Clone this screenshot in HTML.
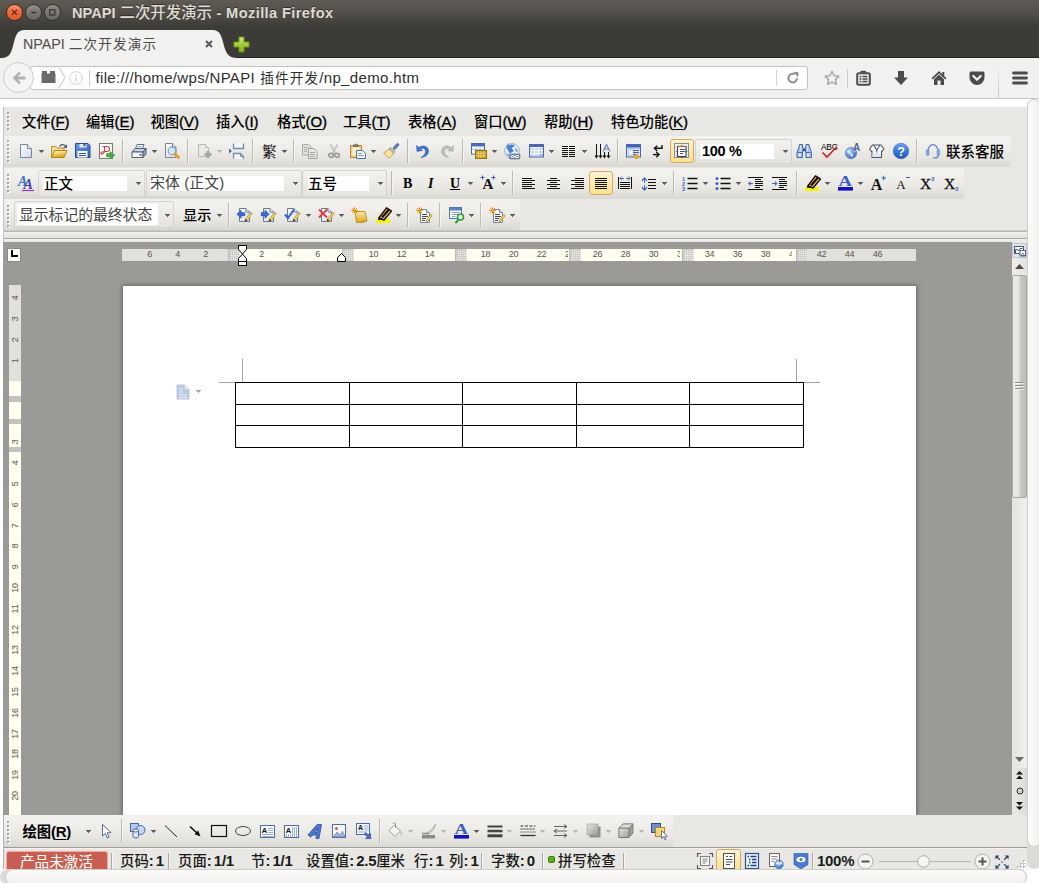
<!DOCTYPE html>
<html><head><meta charset="utf-8"><title>NPAPI 二次开发演示</title>
<style>
html,body{margin:0;padding:0;}
body{width:1039px;height:883px;position:relative;overflow:hidden;background:#fff;font-family:"Liberation Sans","Noto Sans CJK SC","WenQuanYi Zen Hei",sans-serif;font-size:15px;color:#000;}
.a{position:absolute;}
.t{position:absolute;white-space:nowrap;line-height:18px;}
svg{position:absolute;overflow:visible;}
#titlebar{left:0;top:0;width:1039px;height:28px;background:linear-gradient(#5e5b53 0,#57544d 8px,#4b4943 17px,#413f3b 24px,#3c3b37 27px);}
#title{left:72px;top:4px;font-size:14.6px;font-weight:bold;color:#dfdbd2;font-family:"Liberation Sans","Noto Sans CJK SC",sans-serif;text-shadow:0 -1px 0 rgba(0,0,0,.45);}
.wb{position:absolute;width:16.5px;height:16.5px;border-radius:50%;top:4.1px;box-sizing:border-box;}
#tabbar{left:0;top:28px;width:1039px;height:30px;background:#3c3b37;box-shadow:inset 0 -1px 0 #252422;}
#navbar{left:0;top:58px;width:1039px;height:40px;background:#f2f1f0;border-bottom:1px solid #c9c7c3;}
#urlbar{left:30px;top:66px;width:776px;height:22px;background:#fff;border:1px solid #c4c2be;border-radius:3px;}
#plugin{left:3px;top:107px;width:1024px;height:763px;background:#e8e7e3;overflow:hidden;font-family:"Liberation Sans","Noto Sans CJK SC",sans-serif;font-weight:500;}
.strip{position:absolute;background:linear-gradient(#f3f2ef 0,#efeeea 35%,#e6e5e0 70%,#d9d8d2 100%);border-radius:0 0 3px 0;}
.sep{position:absolute;width:1px;height:24px;background:#bab9b4;box-shadow:1px 0 0 #f6f5f3;}
.dd{position:absolute;width:0;height:0;border-left:2.5px solid transparent;border-right:2.5px solid transparent;border-top:3px solid #5c5c5a;}
.dd.dis{border-top-color:#b5b4b0;}
.grip{position:absolute;width:2px;height:2px;background:#a5a49f;box-shadow:1px 1px 0 #fff;}
.field{position:absolute;background:#fff;}
.combo{position:absolute;box-sizing:border-box;border:1px solid #d4d3ce;border-radius:2px;background:linear-gradient(#f3f2ef,#e4e3de);}
.act{position:absolute;box-sizing:border-box;border:1px solid #d9a760;border-radius:3px;background:linear-gradient(#fdf4d6,#fbe7a6 60%,#fbe08c);}
.mc{font-size:14.3px}
.mk{letter-spacing:-0.1px;-webkit-text-stroke:0.35px #000}
.mk u{text-underline-offset:1.5px}
.rn{font-size:9px;color:#5a574b;line-height:18px;letter-spacing:-0.3px;font-weight:normal}
.cj{font-weight:500;letter-spacing:0;font-size:14.4px}
.st{letter-spacing:-0.3px;word-spacing:-1.5px;position:absolute;white-space:nowrap;line-height:18px;font-weight:bold;font-size:15px;font-family:"Liberation Sans","Noto Sans CJK SC",sans-serif;color:#1a1a1a;}
</style></head><body>
<div id="titlebar" class="a"></div>
<div class="wb" style="left:6.2px;background:linear-gradient(#f1906e,#e9683a 50%,#e35a2a);border:1px solid #4a281c"></div>
<div class="wb" style="left:25.2px;background:linear-gradient(#8f8d86,#66645e);border:1px solid #302f2b"></div>
<div class="wb" style="left:44.3px;background:linear-gradient(#8f8d86,#66645e);border:1px solid #302f2b"></div>
<svg style="left:6px;top:4px" width="54" height="17" viewBox="0 0 54 17"><path d="M5.9 5.8l5.1 5.100M11 5.8l-5.100 5.100" stroke="#5a1f0e" stroke-width="1.2" fill="none"/><path d="M25.200 8.500h5.200" stroke="#33322e" stroke-width="1.400"/><rect x="43.700" y="5.800" width="5.200" height="5.200" fill="none" stroke="#33322e" stroke-width="1.200"/></svg>
<div id="title" class="t">NPAPI <span style="font-size:15.4px;font-weight:500">二次开发演示</span><span style="letter-spacing:0.4px"> - Mozilla Firefox</span></div>
<div id="tabbar" class="a"></div>
<svg style="left:0;top:28px" width="250" height="31" viewBox="0 0 250 31"><path d="M0 30 C10 30 11 26 14 14 C17 3 19 2 27 2 L210 2 C218 2 220 3 223 14 C226 26 228 30 238 30 L250 30 L250 31 L0 31Z" fill="#f2f1f0"/></svg>
<div class="t" style="left:23px;top:35px;font-size:14.75px;color:#4c4c4c"><span style="font-size:14.3px">NPAPI </span><span style="font-weight:400;font-size:13.6px;letter-spacing:1.15px">二次开发演示</span></div>
<svg style="left:204px;top:39px" width="10" height="10" viewBox="0 0 10 10"><path d="M2 2l6 6M8 2l-6 6" stroke="#5a5955" stroke-width="2"/></svg>
<svg style="left:233px;top:36px" width="17" height="17" viewBox="0 0 17 17"><defs><linearGradient id="gplus" x1="0" y1="0" x2="0" y2="1"><stop offset="0" stop-color="#cfe47c"/><stop offset="0.5" stop-color="#a9cc3c"/><stop offset="1" stop-color="#86ad1c"/></linearGradient></defs><path d="M6 1h5v5h5v5h-5v5h-5v-5h-5v-5h5z" fill="url(#gplus)" stroke="#6f9a16" stroke-width="1"/></svg>
<div id="navbar" class="a"></div>
<div id="urlbar" class="a"></div>

<div class="a" style="left:3px;top:62px;width:31px;height:31px;border-radius:50%;background:#f5f4f3;border:1px solid #cfcdca;box-sizing:border-box"></div>
<svg style="left:11px;top:70px" width="16" height="16" viewBox="0 0 16 16"><path d="M1.5 8 L8 1.8 L9.8 3.6 L6.8 6.6 L14.5 6.6 L14.5 9.4 L6.8 9.4 L9.8 12.4 L8 14.2Z" fill="#b3b2b0"/></svg>
<svg style="left:41px;top:70px" width="15" height="14" viewBox="0 0 15 14"><path d="M1 1h5v2.5h3V1h5v2.5h0.5V13H0.5V3.500H1z" fill="#6a6a6a"/></svg>
<svg style="left:57px;top:66px" width="10" height="23" viewBox="0 0 10 23"><path d="M1.5 0.500L8 11.500L1.500 22.500" fill="none" stroke="#c9c7c3" stroke-width="1"/></svg>
<svg style="left:69px;top:71px" width="14" height="14" viewBox="0 0 14 14"><circle cx="7" cy="7" r="6.300" fill="none" stroke="#d4d3d1" stroke-width="1"/><rect x="6.300" y="6" width="1.400" height="4.500" fill="#d4d3d1"/><rect x="6.300" y="3.500" width="1.400" height="1.400" fill="#d4d3d1"/></svg>
<div class="a" style="left:89px;top:70px;width:1px;height:16px;background:#cfcdca"></div>
<div class="a" style="left:776px;top:70px;width:1px;height:16px;background:#d6d4d0"></div>
<svg style="left:786px;top:71px" width="14" height="14" viewBox="0 0 14 14"><path d="M11 7.300A4.300 4.300 0 1 1 8.500 3.200" fill="none" stroke="#8a9099" stroke-width="2"/><path d="M7.200 0.800L12.500 1.200L12 6.200Z" fill="#8a9099"/></svg>
<svg style="left:824px;top:70px" width="16" height="16" viewBox="0 0 16 16"><path d="M8 1.300L10.100 5.700L14.900 6.300L11.400 9.600L12.300 14.400L8 12.100L3.700 14.400L4.600 9.600L1.100 6.300L5.900 5.700Z" fill="none" stroke="#a9a8a6" stroke-width="1.500" stroke-linejoin="round"/></svg>
<div class="a" style="left:847px;top:69px;width:1px;height:19px;background:#cfcdca"></div>
<svg style="left:856px;top:70px" width="15" height="16" viewBox="0 0 15 16"><path d="M4.500 0.800h5.500v2H4.500z" fill="#4c4c4c"/><rect x="1.200" y="3.200" width="12.600" height="11.600" rx="1.500" fill="none" stroke="#4c4c4c" stroke-width="2"/><path d="M3.500 6.500h2M6.500 6.500h5M3.500 9h2M6.500 9h5M3.500 11.500h2M6.500 11.500h5" stroke="#4c4c4c" stroke-width="1.500"/></svg>
<svg style="left:893px;top:70px" width="16" height="16" viewBox="0 0 16 16"><path d="M5 1h6v6.500h4L8 15L1 7.500h4z" fill="#4c4c4c"/></svg>
<svg style="left:931px;top:70px" width="16" height="16" viewBox="0 0 16 16"><path d="M8 1L15.500 8.200L14.300 9.400L8 3.400L1.700 9.400L0.500 8.200Z" fill="#4c4c4c"/><path d="M3 9.200L8 4.600L13 9.200V15H9.500V10.500H6.500V15H3Z" fill="#4c4c4c"/><rect x="11.300" y="2" width="2" height="4" fill="#4c4c4c"/></svg>
<svg style="left:969px;top:70px" width="16" height="16" viewBox="0 0 16 16"><path d="M2 1.500h12a1.500 1.500 0 0 1 1.500 1.500v4.500a7.500 7.500 0 0 1-15 0V3A1.500 1.500 0 0 1 2 1.500z" fill="#4c4c4c"/><path d="M4.300 6L8 9.600L11.700 6" fill="none" stroke="#f2f1f0" stroke-width="2.200" stroke-linecap="round" stroke-linejoin="round"/></svg>
<div class="a" style="left:998px;top:68px;width:1px;height:30px;background:linear-gradient(rgba(200,198,194,.2),#c8c6c2)"></div>
<svg style="left:1012px;top:70px" width="16" height="16" viewBox="0 0 16 16"><path d="M1.500 3h13M1.500 8h13M1.500 13h13" stroke="#4c4c4c" stroke-width="2.800" stroke-linecap="round"/></svg>
<div class="t" style="left:95.5px;top:69px;font-size:15px;color:#2e2e2e"><span id="u1" style="letter-spacing:0.33px">file:///home/wps/NPAPI</span><span id="u2" style="font-weight:400;font-size:13.6px;letter-spacing:1.15px;word-spacing:0.3px"> 插件开发</span><span id="u3" style="letter-spacing:0.34px">/np_demo.htm</span></div>
<svg width="0" height="0" style="position:absolute"><defs>
<linearGradient id="gpage" x1="0" y1="0" x2="1" y2="1"><stop offset="0" stop-color="#ffffff"/><stop offset="1" stop-color="#cfd9ee"/></linearGradient>
<linearGradient id="gfold" x1="0" y1="0" x2="0" y2="1"><stop offset="0" stop-color="#fbe9a4"/><stop offset="1" stop-color="#dca425"/></linearGradient>
<linearGradient id="gblue" x1="0" y1="0" x2="0" y2="1"><stop offset="0" stop-color="#5b8ad8"/><stop offset="1" stop-color="#2b57ad"/></linearGradient>
<radialGradient id="gglobe" cx="0.35" cy="0.3" r="0.8"><stop offset="0" stop-color="#a9cdf6"/><stop offset="1" stop-color="#2f66c2"/></radialGradient>
<linearGradient id="ggray" x1="0" y1="0" x2="1" y2="1"><stop offset="0" stop-color="#e6e6e4"/><stop offset="1" stop-color="#9b9b98"/></linearGradient>
<linearGradient id="ghl" x1="0" y1="0" x2="0" y2="1"><stop offset="0" stop-color="#f6c667"/><stop offset="1" stop-color="#c98a1a"/></linearGradient>
<linearGradient id="gblue2" x1="0" y1="0" x2="1" y2="1"><stop offset="0" stop-color="#6a98e8"/><stop offset="1" stop-color="#3560b8"/></linearGradient><linearGradient id="gfold2" x1="0" y1="0" x2="0.300" y2="1"><stop offset="0" stop-color="#fdf2c0"/><stop offset="0.500" stop-color="#f4d46a"/><stop offset="1" stop-color="#d9a21e"/></linearGradient></defs></svg><div id="plugin" class="a">
<div class="grip" style="left:4px;top:5px"></div>
<div class="grip" style="left:4px;top:9px"></div>
<div class="grip" style="left:4px;top:13px"></div>
<div class="grip" style="left:4px;top:17px"></div>
<div class="grip" style="left:4px;top:21px"></div>
<div class="t" style="left:19px;top:6px;"><span class="mc">文件</span><span class="mk">(<u>F</u>)</span></div>
<div class="t" style="left:83px;top:6px;"><span class="mc">编辑</span><span class="mk">(<u>E</u>)</span></div>
<div class="t" style="left:147.5px;top:6px;"><span class="mc">视图</span><span class="mk">(<u>V</u>)</span></div>
<div class="t" style="left:213px;top:6px;"><span class="mc">插入</span><span class="mk">(<u>I</u>)</span></div>
<div class="t" style="left:274px;top:6px;"><span class="mc">格式</span><span class="mk">(<u>O</u>)</span></div>
<div class="t" style="left:340px;top:6px;"><span class="mc">工具</span><span class="mk">(<u>T</u>)</span></div>
<div class="t" style="left:405px;top:6px;"><span class="mc">表格</span><span class="mk">(<u>A</u>)</span></div>
<div class="t" style="left:471px;top:6px;"><span class="mc">窗口</span><span class="mk">(<u>W</u>)</span></div>
<div class="t" style="left:541px;top:6px;"><span class="mc">帮助</span><span class="mk">(<u>H</u>)</span></div>
<div class="t" style="left:608px;top:6px;"><span class="mc">特色功能</span><span class="mk">(<u>K</u>)</span></div>
<div class="strip" style="left:0px;top:29px;width:1008px;height:31px;"></div>
<div class="strip" style="left:0px;top:61px;width:961px;height:31px;"></div>
<div class="strip" style="left:0px;top:92px;width:517px;height:31px;"></div>
<div class="grip" style="left:4px;top:32.5px"></div>
<div class="grip" style="left:4px;top:36.5px"></div>
<div class="grip" style="left:4px;top:40.5px"></div>
<div class="grip" style="left:4px;top:44.5px"></div>
<div class="grip" style="left:4px;top:48.5px"></div>
<div class="grip" style="left:4px;top:52.5px"></div>
<svg style="left:15px;top:36px" width="16" height="16" viewBox="0 0 16 16"><path d="M2.500 1.500h7l4 4v9h-11z" fill="url(#gpage)" stroke="#7b8798"/><path d="M9.500 1.500v4h4" fill="#eef2fa" stroke="#7b8798"/></svg>
<svg style="left:36px;top:43px" width="5" height="3" viewBox="0 0 5 3" shape-rendering="crispEdges"><rect x="0" y="0" width="5" height="1" fill="#5e5e5c"/><rect x="1" y="1" width="3" height="1" fill="#5e5e5c"/><rect x="2" y="2" width="1" height="1" fill="#5e5e5c"/></svg>
<svg style="left:48px;top:36px" width="16" height="16" viewBox="0 0 16 16"><path d="M0.500 14.500V3.500h4.500l1.500 1.500h6.500v2.500" fill="#f2dc98" stroke="#b8923a"/><path d="M0.500 14.500L3.500 7.500h12.500L13 14.500z" fill="url(#gfold2)" stroke="#b0851c"/><path d="M8.500 3.500c1.500-2.500 4.500-2.500 6-0.300" fill="none" stroke="#4a5870" stroke-width="1.300"/><path d="M16 1.300v3.700h-3.700z" fill="#4a5870"/></svg>
<svg style="left:72px;top:36px" width="16" height="16" viewBox="0 0 16 16"><path d="M0.500 0.500h12.500l2 2v12h-14.500z" fill="url(#gblue2)" stroke="#2a4a98"/><rect x="4.500" y="1" width="7" height="3.500" fill="#e6eaf2"/><rect x="8.500" y="1" width="2" height="2.200" fill="#2f4f9c"/><rect x="2.500" y="8" width="10" height="6.500" fill="#fff"/><g shape-rendering="crispEdges"><rect x="4" y="10" width="7" height="1" fill="#35559f"/><rect x="4" y="12" width="7" height="1" fill="#35559f"/></g></svg>
<svg style="left:96px;top:36px" width="16" height="16" viewBox="0 0 16 16"><rect x="0.500" y="0.500" width="13" height="15" fill="#fff" stroke="#7a7a7a"/><path d="M5.500 3.500v5.500M3.500 3.500h4.500a2.500 2.500 0 0 1 0 5h-2.500c-0.500 2-3 3.500-3.500 2s1.500-2 3.500-2" fill="none" stroke="#d04545" stroke-width="1.100"/><path d="M7.500 10.500h3.500v-2l5 3.700l-5 3.700v-2h-3.500z" fill="#3fae3f" stroke="#2f962f" stroke-width="0.500"/></svg>
<div class="sep" style="left:119px;top:32px;height:24px"></div>
<svg style="left:128px;top:36px" width="16" height="16" viewBox="0 0 16 16"><path d="M4.500 6L6 1.500h7L11.500 6z" fill="#fff" stroke="#5c6f8a"/><path d="M6.500 3.500h4M6 5h4" stroke="#9aa" stroke-width="0.800"/><path d="M1 9l3-3.500h11L12 9z" fill="#c7d3e6" stroke="#4c5f7c"/><path d="M1 9h11v5.500H1z" fill="#f2f5fa" stroke="#4c5f7c"/><path d="M12 9l3-3.500v5.500L12 14.500z" fill="#8fa3c2" stroke="#4c5f7c"/><rect x="8.500" y="11" width="2" height="1.800" fill="#c0504d"/></svg>
<svg style="left:149px;top:43px" width="5" height="3" viewBox="0 0 5 3" shape-rendering="crispEdges"><rect x="0" y="0" width="5" height="1" fill="#5e5e5c"/><rect x="1" y="1" width="3" height="1" fill="#5e5e5c"/><rect x="2" y="2" width="1" height="1" fill="#5e5e5c"/></svg>
<svg style="left:161px;top:36px" width="16" height="16" viewBox="0 0 16 16"><path d="M1.500 0.500h7l3.500 3.500v10.500h-10.500z" fill="url(#gpage)" stroke="#7b8798"/><path d="M8.500 0.500v3.500h3.500" fill="#eef2fa" stroke="#7b8798"/><circle cx="8" cy="8" r="3.800" fill="#cfeaf7" fill-opacity="0.900" stroke="#8aa0b8" stroke-width="1.200"/><path d="M11 11l3.500 3.500" stroke="#e8962a" stroke-width="2.600" stroke-linecap="round"/></svg>
<div class="sep" style="left:184px;top:32px;height:24px"></div>
<svg style="left:194px;top:36px" width="16" height="16" viewBox="0 0 16 16"><path d="M1.500 1.500h7l3 3v9h-10z" fill="#e9e9e6" stroke="#b9b9b5"/><path d="M8.500 1.500v3h3" fill="#f4f4f2" stroke="#b9b9b5"/><path d="M11 8v7M7.500 11.500h7" stroke="#a6a6a3" stroke-width="3"/></svg>
<svg style="left:214px;top:43px" width="5" height="3" viewBox="0 0 5 3" shape-rendering="crispEdges"><rect x="0" y="0" width="5" height="1" fill="#b9b8b4"/><rect x="1" y="1" width="3" height="1" fill="#b9b8b4"/><rect x="2" y="2" width="1" height="1" fill="#b9b8b4"/></svg>
<svg style="left:226px;top:36px" width="16" height="16" viewBox="0 0 16 16"><path d="M4.500 0.500v5h10v-5" fill="#f4f7fb" stroke="#6f8bb0" stroke-width="1.300"/><path d="M4.500 15.500v-5h7l3 3v2.500" fill="#f4f7fb" stroke="#6f8bb0" stroke-width="1.300"/><path d="M11.500 10.500v3h3" fill="none" stroke="#6f8bb0"/><path d="M0 5.500l3 2.500l-3 2.500z" fill="#4a6a96"/></svg>
<div class="sep" style="left:249px;top:32px;height:24px"></div>
<div class="t" style="left:259px;top:35px;font-size:14.500px;font-weight:normal;font-family:'Noto Serif CJK SC',serif">繁</div>
<svg style="left:279px;top:43px" width="5" height="3" viewBox="0 0 5 3" shape-rendering="crispEdges"><rect x="0" y="0" width="5" height="1" fill="#5e5e5c"/><rect x="1" y="1" width="3" height="1" fill="#5e5e5c"/><rect x="2" y="2" width="1" height="1" fill="#5e5e5c"/></svg>
<div class="sep" style="left:290px;top:32px;height:24px"></div>
<svg style="left:299px;top:36px" width="16" height="16" viewBox="0 0 16 16"><path d="M0.500 1.500h6l2.500 2.500v8h-8.500z" fill="#e2e2df" stroke="#a9a9a6"/><path d="M6.500 5.500h5.500l3 3v7h-8.500z" fill="#e9e9e6" stroke="#9f9f9c"/><g shape-rendering="crispEdges"><rect x="2" y="4" width="4" height="1" fill="#b0b0ad"/><rect x="2" y="6" width="3" height="1" fill="#b0b0ad"/><rect x="2" y="8" width="3" height="1" fill="#b0b0ad"/><rect x="8" y="9" width="5" height="1" fill="#a6a6a3"/><rect x="8" y="11" width="5" height="1" fill="#a6a6a3"/><rect x="8" y="13" width="5" height="1" fill="#a6a6a3"/></g></svg>
<svg style="left:323px;top:36px" width="16" height="16" viewBox="0 0 16 16"><path d="M4.500 1.500L9.300 10M11.500 1.500L6.700 10" stroke="#c2c2bf" stroke-width="1.600" fill="none"/><ellipse cx="5" cy="12.300" rx="2.300" ry="2" fill="none" stroke="#9c9c99" stroke-width="1.700"/><ellipse cx="11" cy="12.300" rx="2.300" ry="2" fill="none" stroke="#9c9c99" stroke-width="1.700"/></svg>
<svg style="left:347px;top:36px" width="16" height="16" viewBox="0 0 16 16"><rect x="0.500" y="2.500" width="11" height="12" fill="#f1cf87" stroke="#b98b2f"/><rect x="2.500" y="4.500" width="7" height="8" fill="#fdf3d7"/><path d="M3.500 3.500v-1.500h1.500a1 1 0 0 1 2 0h1.500v1.500z" fill="#8c8c8c" stroke="#555" stroke-width="0.700"/><path d="M6.500 7.500h6l3 3v5h-9z" fill="#f4f8fd" stroke="#4e6f9e"/><path d="M8 10.500h4M8 12.500h6" stroke="#7f9cc4" stroke-width="1"/></svg>
<svg style="left:368px;top:43px" width="5" height="3" viewBox="0 0 5 3" shape-rendering="crispEdges"><rect x="0" y="0" width="5" height="1" fill="#5e5e5c"/><rect x="1" y="1" width="3" height="1" fill="#5e5e5c"/><rect x="2" y="2" width="1" height="1" fill="#5e5e5c"/></svg>
<svg style="left:380px;top:36px" width="16" height="16" viewBox="0 0 16 16"><path d="M10 5l3.500-4a1.300 1.300 0 0 1 2 1.700L12 6.500z" fill="#6b7fc7" stroke="#3d4f9a" stroke-width="0.800"/><path d="M7.500 4.500l4.500 4l-1.300 1.500l-4.500-4z" fill="#c9c9c9" stroke="#777" stroke-width="0.700"/><path d="M6 6l4.500 4c-1 2.500-3 4.500-5 5l-5-5c2-1 4-2.500 5.500-4z" fill="#f6e4a2" stroke="#b9983a" stroke-width="0.800"/></svg>
<div class="sep" style="left:404px;top:32px;height:24px"></div>
<svg style="left:412px;top:36px" width="16" height="16" viewBox="0 0 16 16"><path d="M1.500 2.500l0.500 6l5.500-1l-2-1.500c2-1.500 5-0.500 5 2.500c0 2.500-2 4.500-4.500 6c5-0.500 8-3.500 7.500-7c-0.500-4.500-6-6-9.500-3z" fill="#3f72d4" stroke="#2a4fa6" stroke-width="0.500"/></svg>
<svg style="left:436px;top:36px" width="16" height="16" viewBox="0 0 16 16"><path d="M14.500 2.500l-0.500 6l-5.500-1l2-1.500c-2-1.500-5-0.500-5 2.500c0 2.500 2 4.500 4.500 6c-5-0.500-8-3.500-7.500-7c0.500-4.500 6-6 9.500-3z" fill="#bdbdba" stroke="#a6a6a3" stroke-width="0.500"/></svg>
<div class="sep" style="left:459px;top:32px;height:24px"></div>
<svg style="left:468px;top:36px" width="16" height="16" viewBox="0 0 16 16"><rect x="0.500" y="0.500" width="13" height="10.500" fill="#fff" stroke="#4a68a8"/><rect x="1" y="1" width="12" height="2" fill="#4a6cb8"/><rect x="1" y="3" width="12" height="1" fill="#a9c0ea"/><path d="M1 6.500h12M5 4v6.500M9 4v6.500" stroke="#aab9d6" stroke-width="0.900"/><rect x="4.500" y="7.500" width="11" height="8" fill="#c8961a" stroke="#94700e"/><path d="M5 10.200h10M5 12.800h10M7.300 8v7M10 8v7M12.700 8v7" stroke="#f6dc90" stroke-width="0.800"/></svg>
<svg style="left:489px;top:43px" width="5" height="3" viewBox="0 0 5 3" shape-rendering="crispEdges"><rect x="0" y="0" width="5" height="1" fill="#5e5e5c"/><rect x="1" y="1" width="3" height="1" fill="#5e5e5c"/><rect x="2" y="2" width="1" height="1" fill="#5e5e5c"/></svg>
<svg style="left:501px;top:36px" width="16" height="16" viewBox="0 0 16 16"><circle cx="8" cy="8" r="7.500" fill="#e4eefb" stroke="#8fa6cc" stroke-width="0.800"/><path d="M4 2.500c2-1.500 5-1.500 7 0c-1 1.500-2.500 1-3 2.500s2 1.500 1.500 3s-2.500 1-3.500 2.500c-1.500-1-1-3-2.500-4s-1-3.500 0.500-6.500z" fill="#4f7fd0"/><path d="M11.500 4.500c1.500 1 2.500 3 2 5l-2-1.500z" fill="#6f98dc"/><path d="M2 10c1 2 2.500 3.500 4.500 4l-0.500-2.500z" fill="#7fa4e0"/><rect x="5.500" y="11" width="10.500" height="5" rx="1.500" fill="#7088ae" stroke="#4a6088" stroke-width="0.600"/><rect x="7" y="12.500" width="3" height="2" rx="0.500" fill="none" stroke="#fff" stroke-width="1"/><rect x="11.500" y="12.500" width="3" height="2" rx="0.500" fill="none" stroke="#fff" stroke-width="1"/><path d="M10 13.500h1.500" stroke="#fff" stroke-width="1"/></svg>
<svg style="left:525px;top:36px" width="16" height="16" viewBox="0 0 16 16"><rect x="1.500" y="1.500" width="14" height="12.500" fill="#c9d7ef" stroke="#4a68a8"/><rect x="2" y="2" width="13" height="2" fill="#4668b4"/><g shape-rendering="crispEdges"><rect x="2" y="4" width="13" height="1" fill="#eef3fb"/><rect x="2" y="7" width="13" height="1" fill="#f4f7fc"/><rect x="2" y="10" width="13" height="1" fill="#f4f7fc"/><rect x="6" y="4" width="1" height="9" fill="#f4f7fc"/><rect x="10" y="4" width="1" height="9" fill="#f4f7fc"/></g><rect x="11" y="11" width="4" height="2.500" fill="#9fb6de"/></svg>
<svg style="left:546px;top:43px" width="5" height="3" viewBox="0 0 5 3" shape-rendering="crispEdges"><rect x="0" y="0" width="5" height="1" fill="#5e5e5c"/><rect x="1" y="1" width="3" height="1" fill="#5e5e5c"/><rect x="2" y="2" width="1" height="1" fill="#5e5e5c"/></svg>
<svg style="left:558px;top:36px" width="16" height="16" viewBox="0 0 16 16"><g shape-rendering="crispEdges"><rect x="1" y="3" width="6" height="1" fill="#111"/><rect x="1" y="5" width="6" height="1" fill="#111"/><rect x="1" y="7" width="6" height="1" fill="#111"/><rect x="1" y="9" width="6" height="1" fill="#111"/><rect x="1" y="11" width="6" height="1" fill="#111"/><rect x="1" y="13" width="6" height="1" fill="#111"/><rect x="8" y="3" width="6" height="1" fill="#111"/><rect x="8" y="5" width="6" height="1" fill="#111"/><rect x="8" y="7" width="6" height="1" fill="#111"/><rect x="8" y="9" width="6" height="1" fill="#111"/><rect x="8" y="11" width="6" height="1" fill="#111"/><rect x="8" y="13" width="6" height="1" fill="#111"/></g></svg>
<svg style="left:579px;top:43px" width="5" height="3" viewBox="0 0 5 3" shape-rendering="crispEdges"><rect x="0" y="0" width="5" height="1" fill="#5e5e5c"/><rect x="1" y="1" width="3" height="1" fill="#5e5e5c"/><rect x="2" y="2" width="1" height="1" fill="#5e5e5c"/></svg>
<svg style="left:591px;top:36px" width="16" height="16" viewBox="0 0 16 16"><g shape-rendering="crispEdges"><rect x="2" y="1" width="1" height="13" fill="#111"/><rect x="6" y="1" width="1" height="13" fill="#111"/><rect x="10" y="9" width="1" height="5" fill="#111"/><rect x="14" y="9" width="1" height="5" fill="#111"/></g><path d="M0.500 12.500h4l-2 3zM4.500 12.500h4l-2 3zM8.500 12.500h4l-2 3zM12.500 12.500h4l-2 3z" fill="#111"/><path d="M9 8.500L12.500 1.500L16 8.500M10.300 6h4.400" fill="none" stroke="#5f7fc4" stroke-width="1.100"/></svg>
<div class="sep" style="left:614px;top:32px;height:24px"></div>
<svg style="left:623px;top:36px" width="16" height="16" viewBox="0 0 16 16"><rect x="0.500" y="1.500" width="14" height="12.500" fill="#dbe6f6" stroke="#4a68a8"/><rect x="1" y="2" width="13" height="2.500" fill="#3f63b4"/><path d="M1 5h13" stroke="#89a4d8" stroke-width="1"/><ellipse cx="5" cy="9.500" rx="3" ry="3.300" fill="#f1f6fc" stroke="#9db4dc" stroke-width="0.800"/><g shape-rendering="crispEdges"><rect x="7" y="7" width="6" height="1" fill="#3f5fa0"/><rect x="7" y="9" width="6" height="1" fill="#3f5fa0"/><rect x="7" y="11" width="4" height="1" fill="#3f5fa0"/></g><path d="M10.500 10.700l2.700 2.700l-2.700 2.700l-2.700-2.700z" fill="#f4a83a" stroke="#d08418" stroke-width="0.700"/></svg>
<svg style="left:646px;top:36px" width="16" height="16" viewBox="0 0 16 16"><path d="M13 2v3.300H5.800" fill="none" stroke="#111" stroke-width="1.400"/><path d="M8.300 2.700L5.400 5.300L8.300 7.900" fill="none" stroke="#111" stroke-width="1.400"/><path d="M4 11.600h5.800" fill="none" stroke="#111" stroke-width="1.400"/><path d="M7.200 9L10.100 11.600L7.200 14.200" fill="none" stroke="#111" stroke-width="1.400"/></svg>
<div class="act" style="left:667px;top:32px;width:24px;height:24px;"></div>
<svg style="left:671px;top:36px" width="16" height="16" viewBox="0 0 16 16"><rect x="0.500" y="0.500" width="14" height="14" fill="#ececea" stroke="#8c8c8a"/><rect x="3.500" y="3.500" width="8.500" height="10" fill="#fff" stroke="#2f405f" stroke-width="1.100"/><path d="M3.500 3.500h8.500" stroke="#b8683a" stroke-width="1.100"/><path d="M7.750 2v1.500" stroke="#b8683a" stroke-width="1.200"/><path d="M7.750 13.500v1.300M2.300 8.500h1.200M12 8.500h1.200" stroke="#2f405f" stroke-width="1.200"/><g shape-rendering="crispEdges"><rect x="5.500" y="6" width="5" height="1" fill="#555"/><rect x="5.500" y="8" width="5" height="1" fill="#555"/><rect x="5.500" y="10" width="3" height="1" fill="#555"/></g></svg>
<div class="combo" style="left:692px;top:32px;width:97px;height:25px;"></div>
<div class="field" style="left:697px;top:37px;width:74px;height:15px;"></div>
<div class="t" style="left:699px;top:35px;font-weight:bold;font-size:14.5px;letter-spacing:-0.300px">100 %</div>
<svg style="left:780px;top:43px" width="5" height="3" viewBox="0 0 5 3" shape-rendering="crispEdges"><rect x="0" y="0" width="5" height="1" fill="#5e5e5c"/><rect x="1" y="1" width="3" height="1" fill="#5e5e5c"/><rect x="2" y="2" width="1" height="1" fill="#5e5e5c"/></svg>
<svg style="left:793px;top:36px" width="16" height="16" viewBox="0 0 16 16"><path d="M3.500 1.500h3v2.500h0.500v5h-0.500v5.500h-5.500V9.500L3 4z" fill="#a9c2ee" stroke="#3558a8" stroke-width="0.900" stroke-linejoin="round"/><path d="M13 1.500h-3v2.500h-0.500v5h0.500v5.500h5.500V9.500L13.500 4z" fill="#a9c2ee" stroke="#3558a8" stroke-width="0.900" stroke-linejoin="round"/><rect x="7" y="5.500" width="2.500" height="2.500" fill="#3558a8"/><path d="M1.500 9.500h5M10 9.500h5" stroke="#3558a8" stroke-width="0.800"/><path d="M3.500 10.500v3M12 10.500v3" stroke="#eaf1fc" stroke-width="1.600"/><path d="M4.700 2.500v6M11.200 2.500v6" stroke="#dfe9fa" stroke-width="1"/></svg>
<svg style="left:818px;top:36px" width="16" height="16" viewBox="0 0 16 16"><text x="8.300" y="6.500" font-family="Liberation Sans,sans-serif" font-size="8.500" text-anchor="middle" fill="#000" letter-spacing="-0.300">ABC</text><path d="M1.500 9.500l4.500 4.500l10-10.500" fill="none" stroke="#d42020" stroke-width="1.700"/></svg>
<svg style="left:841px;top:36px" width="16" height="16" viewBox="0 0 16 16"><circle cx="7" cy="10" r="5.800" fill="url(#gglobe)" stroke="#4f78c0" stroke-width="0.500"/><path d="M2.500 8.500c1-1.500 2.500-2 3.500-1s0.500 2.500 2 3s1.500 2.500 0.500 3.500c-1-0.500-2-1-2.500-2.500s-2.500-1-3.500-3z" fill="#dfeafa" fill-opacity="0.850"/><path d="M9 5.500c1 0.500 2.500 1.500 3 3l-2 0.500z" fill="#dfeafa" fill-opacity="0.700"/><text x="12.700" y="7.500" font-family="Liberation Sans,sans-serif" font-weight="bold" font-size="10" text-anchor="middle" fill="#56678c">A</text></svg>
<svg style="left:866px;top:36px" width="16" height="16" viewBox="0 0 16 16"><path d="M3.500 2L0.500 6L2.500 8.500L3 8V14.500H12.500V8L13 8.500L15 6L12 2Z" fill="#fff" stroke="#4a5468" stroke-width="1.100" stroke-linejoin="round"/><path d="M3.500 10h8.500v4h-8.500z" fill="#dfe8f6"/><path d="M4.500 2L7.800 7L11 2M7.800 7V9.500" fill="none" stroke="#4a5468" stroke-width="1.100"/></svg>
<svg style="left:890px;top:36px" width="16" height="16" viewBox="0 0 16 16"><defs><linearGradient id="ghelp" x1="0" y1="0" x2="0" y2="1"><stop offset="0" stop-color="#6aa4ee"/><stop offset="0.500" stop-color="#3a78d8"/><stop offset="1" stop-color="#1f55bc"/></linearGradient></defs><circle cx="8" cy="8" r="7.800" fill="url(#ghelp)" stroke="#2b5cb8" stroke-width="0.500"/><text x="8" y="12.500" font-family="Liberation Sans,sans-serif" font-weight="bold" font-size="12.500" text-anchor="middle" fill="#fff">?</text></svg>
<div class="sep" style="left:913px;top:32px;height:24px"></div>
<svg style="left:922px;top:36px" width="16" height="16" viewBox="0 0 16 16"><path d="M3 9.500V8a5 6.300 0 0 1 10 0V9.500" fill="none" stroke="#5a82d0" stroke-width="1.300"/><rect x="1.300" y="6.500" width="2.600" height="6" rx="1.300" fill="#86a6e4" stroke="#5a82d0" stroke-width="0.600"/><rect x="12.100" y="6.500" width="2.600" height="6" rx="1.300" fill="#86a6e4" stroke="#5a82d0" stroke-width="0.600"/><path d="M13.500 12.500c-0.500 2-2.500 2.800-5.500 2.500" fill="none" stroke="#5a82d0" stroke-width="1.100"/></svg>
<div class="t" style="left:943px;top:36px;font-size:14.500px;font-family:'Liberation Sans','Noto Sans CJK SC',sans-serif;font-weight:500">联系客服</div>
<div class="grip" style="left:4px;top:67px"></div>
<div class="grip" style="left:4px;top:71px"></div>
<div class="grip" style="left:4px;top:75px"></div>
<div class="grip" style="left:4px;top:79px"></div>
<div class="grip" style="left:4px;top:83px"></div>
<svg style="left:15px;top:68px" width="16" height="16" viewBox="0 0 16 16"><text x="0" y="11" font-family="Liberation Serif,serif" font-style="italic" font-weight="bold" font-size="14" fill="#3a78c8">A</text><text x="5.500" y="14" font-family="Liberation Serif,serif" font-style="italic" font-weight="bold" font-size="14" fill="#4a3fb4">A</text><path d="M4 15.500h12" stroke="#9a3aa8" stroke-width="1.200"/></svg>
<div class="combo" style="left:35px;top:63px;width:107px;height:27px;"></div>
<div class="field" style="left:40px;top:69px;width:84px;height:15px;"></div>
<div class="t" style="left:41px;top:68px;font-size:14.500px">正文</div>
<svg style="left:133px;top:75px" width="5" height="3" viewBox="0 0 5 3" shape-rendering="crispEdges"><rect x="0" y="0" width="5" height="1" fill="#5e5e5c"/><rect x="1" y="1" width="3" height="1" fill="#5e5e5c"/><rect x="2" y="2" width="1" height="1" fill="#5e5e5c"/></svg>
<div class="combo" style="left:143px;top:63px;width:156px;height:27px;"></div>
<div class="field" style="left:147px;top:69px;width:134px;height:15px;"></div>
<div class="t" style="left:147px;top:67px;color:#444;font-weight:400">宋体 (正文)</div>
<svg style="left:290px;top:75px" width="5" height="3" viewBox="0 0 5 3" shape-rendering="crispEdges"><rect x="0" y="0" width="5" height="1" fill="#5e5e5c"/><rect x="1" y="1" width="3" height="1" fill="#5e5e5c"/><rect x="2" y="2" width="1" height="1" fill="#5e5e5c"/></svg>
<div class="combo" style="left:299px;top:63px;width:85px;height:27px;"></div>
<div class="field" style="left:305px;top:69px;width:61px;height:15px;"></div>
<div class="t" style="left:305px;top:68px;font-size:14.500px">五号</div>
<svg style="left:375px;top:75px" width="5" height="3" viewBox="0 0 5 3" shape-rendering="crispEdges"><rect x="0" y="0" width="5" height="1" fill="#5e5e5c"/><rect x="1" y="1" width="3" height="1" fill="#5e5e5c"/><rect x="2" y="2" width="1" height="1" fill="#5e5e5c"/></svg>
<div class="sep" style="left:388px;top:64px;height:24px"></div>
<div class="t" style="left:400px;top:67.5px;font-family:'Liberation Serif',serif;font-weight:bold;font-size:14px">B</div>
<div class="t" style="left:425px;top:67.5px;font-family:'Liberation Serif',serif;font-weight:bold;font-style:italic;font-size:14px">I</div>
<div class="t" style="left:447px;top:67.5px;font-family:'Liberation Serif',serif;font-weight:bold;font-size:14px"><u>U</u></div>
<svg style="left:465px;top:75px" width="5" height="3" viewBox="0 0 5 3" shape-rendering="crispEdges"><rect x="0" y="0" width="5" height="1" fill="#5e5e5c"/><rect x="1" y="1" width="3" height="1" fill="#5e5e5c"/><rect x="2" y="2" width="1" height="1" fill="#5e5e5c"/></svg>
<svg style="left:477px;top:68px" width="16" height="16" viewBox="0 0 16 16"><text x="8" y="14" font-family="Liberation Serif,serif" font-weight="bold" font-size="15" text-anchor="middle" fill="#111">A</text><path d="M0.500 2.500h4M2.500 0.500v4M11.500 2.500h4M13.500 0.500v4" stroke="#3b5fc0" stroke-width="1"/></svg>
<svg style="left:498px;top:75px" width="5" height="3" viewBox="0 0 5 3" shape-rendering="crispEdges"><rect x="0" y="0" width="5" height="1" fill="#5e5e5c"/><rect x="1" y="1" width="3" height="1" fill="#5e5e5c"/><rect x="2" y="2" width="1" height="1" fill="#5e5e5c"/></svg>
<div class="sep" style="left:509px;top:64px;height:24px"></div>
<svg style="left:518px;top:68px" width="16" height="16" viewBox="0 0 16 16"><g shape-rendering="crispEdges"><rect x="1" y="3" width="10" height="1" fill="#111"/><rect x="1" y="5" width="13" height="1" fill="#111"/><rect x="1" y="7" width="10" height="1" fill="#111"/><rect x="1" y="9" width="13" height="1" fill="#111"/><rect x="1" y="11" width="10" height="1" fill="#111"/><rect x="1" y="13" width="13" height="1" fill="#111"/></g></svg>
<svg style="left:543px;top:68px" width="16" height="16" viewBox="0 0 16 16"><g shape-rendering="crispEdges"><rect x="4" y="3" width="7" height="1" fill="#111"/><rect x="1" y="5" width="13" height="1" fill="#111"/><rect x="4" y="7" width="7" height="1" fill="#111"/><rect x="1" y="9" width="13" height="1" fill="#111"/><rect x="4" y="11" width="7" height="1" fill="#111"/><rect x="1" y="13" width="13" height="1" fill="#111"/></g></svg>
<svg style="left:567px;top:68px" width="16" height="16" viewBox="0 0 16 16"><g shape-rendering="crispEdges"><rect x="5" y="3" width="9" height="1" fill="#111"/><rect x="1" y="5" width="13" height="1" fill="#111"/><rect x="5" y="7" width="9" height="1" fill="#111"/><rect x="1" y="9" width="13" height="1" fill="#111"/><rect x="5" y="11" width="9" height="1" fill="#111"/><rect x="1" y="13" width="13" height="1" fill="#111"/></g></svg>
<div class="act" style="left:586px;top:64px;width:24px;height:24px;"></div>
<svg style="left:590px;top:68px" width="16" height="16" viewBox="0 0 16 16"><g shape-rendering="crispEdges"><rect x="2" y="3" width="12" height="1" fill="#111"/><rect x="2" y="5" width="12" height="1" fill="#111"/><rect x="2" y="7" width="12" height="1" fill="#111"/><rect x="2" y="9" width="12" height="1" fill="#111"/><rect x="2" y="11" width="12" height="1" fill="#111"/><rect x="2" y="13" width="12" height="1" fill="#111"/></g></svg>
<svg style="left:614px;top:68px" width="16" height="16" viewBox="0 0 16 16"><g shape-rendering="crispEdges"><rect x="1" y="2" width="1" height="12" fill="#111"/><rect x="14" y="2" width="1" height="12" fill="#111"/><rect x="3" y="7" width="10" height="1" fill="#111"/><rect x="3" y="9" width="10" height="1" fill="#111"/><rect x="3" y="11" width="10" height="1" fill="#111"/><rect x="3" y="13" width="10" height="1" fill="#111"/><rect x="3" y="3" width="4" height="1" fill="#4a68b4"/><rect x="9" y="3" width="4" height="1" fill="#4a68b4"/></g><path d="M5 1.500L3 3.500L5 5.500M11 1.500L13 3.500L11 5.500" fill="none" stroke="#4a68b4" stroke-width="1"/></svg>
<svg style="left:638px;top:68px" width="16" height="16" viewBox="0 0 16 16"><g shape-rendering="crispEdges"><rect x="7" y="4" width="8" height="1" fill="#111"/><rect x="7" y="7" width="8" height="1" fill="#111"/><rect x="7" y="10" width="8" height="1" fill="#111"/><rect x="7" y="13" width="8" height="1" fill="#111"/><rect x="3" y="4" width="1" height="4" fill="#4a68b4"/><rect x="3" y="10" width="1" height="4" fill="#4a68b4"/></g><path d="M1 5.700L3.500 3L6 5.700M1 12.300L3.500 15L6 12.300" fill="none" stroke="#4a68b4" stroke-width="1.300"/></svg>
<svg style="left:659px;top:75px" width="5" height="3" viewBox="0 0 5 3" shape-rendering="crispEdges"><rect x="0" y="0" width="5" height="1" fill="#5e5e5c"/><rect x="1" y="1" width="3" height="1" fill="#5e5e5c"/><rect x="2" y="2" width="1" height="1" fill="#5e5e5c"/></svg>
<div class="sep" style="left:670px;top:64px;height:24px"></div>
<svg style="left:679px;top:68px" width="16" height="16" viewBox="0 0 16 16"><text x="0" y="5.500" font-family="Liberation Sans,sans-serif" font-weight="bold" font-size="5.500" fill="#3b5fc0">1</text><text x="0" y="10.500" font-family="Liberation Sans,sans-serif" font-weight="bold" font-size="5.500" fill="#3b5fc0">2</text><text x="0" y="15.500" font-family="Liberation Sans,sans-serif" font-weight="bold" font-size="5.500" fill="#3b5fc0">3</text><path d="M5.500 3.500h10M5.500 8.500h10M5.500 13.500h10" stroke="#111" stroke-width="1.300"/></svg>
<svg style="left:700px;top:75px" width="5" height="3" viewBox="0 0 5 3" shape-rendering="crispEdges"><rect x="0" y="0" width="5" height="1" fill="#5e5e5c"/><rect x="1" y="1" width="3" height="1" fill="#5e5e5c"/><rect x="2" y="2" width="1" height="1" fill="#5e5e5c"/></svg>
<svg style="left:712px;top:68px" width="16" height="16" viewBox="0 0 16 16"><circle cx="2" cy="3.500" r="1.500" fill="#3b5fc0"/><circle cx="2" cy="8.500" r="1.500" fill="#3b5fc0"/><circle cx="2" cy="13.500" r="1.500" fill="#3b5fc0"/><path d="M5.500 3.500h10M5.500 8.500h10M5.500 13.500h10" stroke="#111" stroke-width="1.300"/></svg>
<svg style="left:733px;top:75px" width="5" height="3" viewBox="0 0 5 3" shape-rendering="crispEdges"><rect x="0" y="0" width="5" height="1" fill="#5e5e5c"/><rect x="1" y="1" width="3" height="1" fill="#5e5e5c"/><rect x="2" y="2" width="1" height="1" fill="#5e5e5c"/></svg>
<svg style="left:744px;top:68px" width="16" height="16" viewBox="0 0 16 16"><g shape-rendering="crispEdges"><rect x="1" y="2" width="15" height="1" fill="#111"/><rect x="8" y="4" width="6" height="1" fill="#111"/><rect x="8" y="6" width="8" height="1" fill="#111"/><rect x="8" y="8" width="8" height="1" fill="#111"/><rect x="8" y="10" width="8" height="1" fill="#111"/><rect x="8" y="12" width="5" height="1" fill="#111"/><rect x="1" y="14" width="15" height="1" fill="#111"/><rect x="1" y="8" width="5" height="1" fill="#4a68b4"/></g><path d="M3.500 6L1 8.500L3.500 11z" fill="#4a68b4"/></svg>
<svg style="left:768px;top:68px" width="16" height="16" viewBox="0 0 16 16"><g shape-rendering="crispEdges"><rect x="1" y="2" width="15" height="1" fill="#111"/><rect x="8" y="4" width="6" height="1" fill="#111"/><rect x="8" y="6" width="8" height="1" fill="#111"/><rect x="8" y="8" width="8" height="1" fill="#111"/><rect x="8" y="10" width="8" height="1" fill="#111"/><rect x="8" y="12" width="5" height="1" fill="#111"/><rect x="1" y="14" width="15" height="1" fill="#111"/><rect x="1" y="8" width="5" height="1" fill="#4a68b4"/></g><path d="M4 6L6.500 8.500L4 11z" fill="#4a68b4"/></svg>
<div class="sep" style="left:793px;top:64px;height:24px"></div>
<svg style="left:802px;top:68px" width="16" height="16" viewBox="0 0 16 16"><rect x="0" y="12" width="14" height="4" fill="#f8f400"/><path d="M2.800 11L10.500 0.800l5 3.300L8 13z" fill="#f4b04a" stroke="#111" stroke-width="1.400" stroke-linejoin="round"/><path d="M6 10.500L13 2.500" stroke="#111" stroke-width="2"/><path d="M2 13l0.800-3l4 2.500z" fill="#111"/></svg>
<svg style="left:822px;top:75px" width="5" height="3" viewBox="0 0 5 3" shape-rendering="crispEdges"><rect x="0" y="0" width="5" height="1" fill="#5e5e5c"/><rect x="1" y="1" width="3" height="1" fill="#5e5e5c"/><rect x="2" y="2" width="1" height="1" fill="#5e5e5c"/></svg>
<svg style="left:834px;top:68px" width="16" height="16" viewBox="0 0 16 16"><text transform="translate(8.300 10.500) scale(1.250 1)" x="0" y="0" font-family="Liberation Serif,serif" font-weight="bold" font-size="15" text-anchor="middle" fill="#3a5fc4">A</text><rect x="1" y="12" width="15" height="3.600" fill="#1212c4"/></svg>
<svg style="left:855px;top:75px" width="5" height="3" viewBox="0 0 5 3" shape-rendering="crispEdges"><rect x="0" y="0" width="5" height="1" fill="#5e5e5c"/><rect x="1" y="1" width="3" height="1" fill="#5e5e5c"/><rect x="2" y="2" width="1" height="1" fill="#5e5e5c"/></svg>
<svg style="left:867px;top:68px" width="16" height="16" viewBox="0 0 16 16"><text x="6.500" y="15" font-family="Liberation Serif,serif" font-weight="bold" font-size="16" text-anchor="middle" fill="#111">A</text><path d="M11.500 3h4.500M13.700 0.800v4.500" stroke="#3b5fc0" stroke-width="1"/></svg>
<svg style="left:892px;top:68px" width="16" height="16" viewBox="0 0 16 16"><text x="6" y="14" font-family="Liberation Serif,serif" font-size="13" text-anchor="middle" fill="#111">A</text><path d="M11 2.500h4" stroke="#3b5fc0" stroke-width="1"/></svg>
<svg style="left:916px;top:68px" width="16" height="16" viewBox="0 0 16 16"><text x="6.500" y="14" font-family="Liberation Serif,serif" font-size="15.500" text-anchor="middle" fill="#111" stroke="#111" stroke-width="0.300">X</text><text x="14" y="6" font-family="Liberation Sans,sans-serif" font-weight="bold" font-size="6" text-anchor="middle" fill="#3b5fc0">2</text></svg>
<svg style="left:940px;top:68px" width="16" height="16" viewBox="0 0 16 16"><text x="6.500" y="14" font-family="Liberation Serif,serif" font-size="15.500" text-anchor="middle" fill="#111" stroke="#111" stroke-width="0.300">X</text><text x="14" y="16" font-family="Liberation Sans,sans-serif" font-weight="bold" font-size="6" text-anchor="middle" fill="#3b5fc0">2</text></svg>
<div class="grip" style="left:4px;top:97.5px"></div>
<div class="grip" style="left:4px;top:101.5px"></div>
<div class="grip" style="left:4px;top:105.5px"></div>
<div class="grip" style="left:4px;top:109.5px"></div>
<div class="grip" style="left:4px;top:113.5px"></div>
<div class="grip" style="left:4px;top:117.5px"></div>
<div class="combo" style="left:11px;top:94px;width:160px;height:27px;"></div>
<div class="field" style="left:13.5px;top:97px;width:141.5px;height:21px;"></div>
<div class="t" style="left:16px;top:99px;color:#444;font-size:14.800px;font-weight:400">显示标记的最终状态</div>
<svg style="left:162px;top:107px" width="5" height="3" viewBox="0 0 5 3" shape-rendering="crispEdges"><rect x="0" y="0" width="5" height="1" fill="#5e5e5c"/><rect x="1" y="1" width="3" height="1" fill="#5e5e5c"/><rect x="2" y="2" width="1" height="1" fill="#5e5e5c"/></svg>
<div class="t" style="left:180px;top:99px;font-size:14.200px">显示</div>
<svg style="left:214px;top:107px" width="5" height="3" viewBox="0 0 5 3" shape-rendering="crispEdges"><rect x="0" y="0" width="5" height="1" fill="#5e5e5c"/><rect x="1" y="1" width="3" height="1" fill="#5e5e5c"/><rect x="2" y="2" width="1" height="1" fill="#5e5e5c"/></svg>
<div class="sep" style="left:225px;top:96px;height:24px"></div>
<svg style="left:233px;top:100px" width="16" height="16" viewBox="0 0 16 16"><path d="M3.500 1.500h6.500l3.500 3.500v9.500h-10z" fill="url(#gpage)" stroke="#6a7a96"/><path d="M10 1.500v3.500h3.500" fill="#f4f7fc" stroke="#6a7a96"/><path d="M9.500 12L14.800 5.200l1.700 1.400L11.200 13.400l-2.300 0.900z" fill="#f6d552" stroke="#a8842a" stroke-width="0.600"/><path d="M14.800 5.200l1.700 1.400l-0.900 1.100l-1.700-1.400z" fill="#e9a9a0"/><path d="M8.800 14.400l0.600-2.400l1.900 1.500z" fill="#222"/><path d="M1 7.200l4-4v2.500h3.700v3h-3.700v2.500z" fill="#3a6edc" stroke="#1f479c" stroke-width="0.700" stroke-linejoin="round"/></svg>
<svg style="left:257px;top:100px" width="16" height="16" viewBox="0 0 16 16"><path d="M3.500 1.500h6.500l3.500 3.500v9.500h-10z" fill="url(#gpage)" stroke="#6a7a96"/><path d="M10 1.500v3.500h3.500" fill="#f4f7fc" stroke="#6a7a96"/><path d="M9.500 12L14.800 5.200l1.700 1.400L11.200 13.400l-2.300 0.900z" fill="#f6d552" stroke="#a8842a" stroke-width="0.600"/><path d="M14.800 5.200l1.700 1.400l-0.900 1.100l-1.700-1.400z" fill="#e9a9a0"/><path d="M8.800 14.400l0.600-2.400l1.900 1.500z" fill="#222"/><path d="M9 7.200l-4-4v2.500h-3.700v3h3.700v2.500z" fill="#3a6edc" stroke="#1f479c" stroke-width="0.700" stroke-linejoin="round"/></svg>
<svg style="left:281px;top:100px" width="16" height="16" viewBox="0 0 16 16"><path d="M3.500 1.500h6.500l3.500 3.500v9.500h-10z" fill="url(#gpage)" stroke="#6a7a96"/><path d="M10 1.500v3.500h3.500" fill="#f4f7fc" stroke="#6a7a96"/><path d="M9.500 12L14.800 5.200l1.700 1.400L11.200 13.400l-2.300 0.900z" fill="#f6d552" stroke="#a8842a" stroke-width="0.600"/><path d="M14.800 5.200l1.700 1.400l-0.900 1.100l-1.700-1.400z" fill="#e9a9a0"/><path d="M8.800 14.400l0.600-2.400l1.900 1.500z" fill="#222"/><path d="M1 7.500l3 3.500L10 2.500" fill="none" stroke="#3a62c0" stroke-width="2"/></svg>
<svg style="left:303px;top:107px" width="5" height="3" viewBox="0 0 5 3" shape-rendering="crispEdges"><rect x="0" y="0" width="5" height="1" fill="#5e5e5c"/><rect x="1" y="1" width="3" height="1" fill="#5e5e5c"/><rect x="2" y="2" width="1" height="1" fill="#5e5e5c"/></svg>
<svg style="left:315px;top:100px" width="16" height="16" viewBox="0 0 16 16"><path d="M3.500 1.500h6.500l3.500 3.500v9.500h-10z" fill="url(#gpage)" stroke="#6a7a96"/><path d="M10 1.500v3.500h3.500" fill="#f4f7fc" stroke="#6a7a96"/><path d="M9.500 12L14.800 5.200l1.700 1.400L11.200 13.400l-2.300 0.900z" fill="#f6d552" stroke="#a8842a" stroke-width="0.600"/><path d="M14.800 5.200l1.700 1.400l-0.900 1.100l-1.700-1.400z" fill="#e9a9a0"/><path d="M8.800 14.400l0.600-2.400l1.900 1.500z" fill="#222"/><path d="M1 2.500l8 8M9 2.500l-8 8" fill="none" stroke="#e03a3a" stroke-width="1.800"/></svg>
<svg style="left:336px;top:107px" width="5" height="3" viewBox="0 0 5 3" shape-rendering="crispEdges"><rect x="0" y="0" width="5" height="1" fill="#5e5e5c"/><rect x="1" y="1" width="3" height="1" fill="#5e5e5c"/><rect x="2" y="2" width="1" height="1" fill="#5e5e5c"/></svg>
<svg style="left:348px;top:100px" width="16" height="16" viewBox="0 0 16 16"><path d="M4 4.500h10l2 9.500l-4.500 1.500h-6z" fill="url(#gfold)" stroke="#b98b1e" stroke-width="0.900"/><path d="M11.500 15.500l0.500-2.500l4 1z" fill="#c99a2a"/><path d="M3.500 0v7M0 3.500h7M1 1l5 5M6 1L1 6" stroke="#f09a1c" stroke-width="1"/></svg>
<svg style="left:373px;top:100px" width="16" height="16" viewBox="0 0 16 16"><rect x="0" y="12" width="14" height="4" fill="#f8f400"/><path d="M2.800 11L10.500 0.800l5 3.300L8 13z" fill="#f4b04a" stroke="#111" stroke-width="1.400" stroke-linejoin="round"/><path d="M6 10.500L13 2.500" stroke="#111" stroke-width="2"/><path d="M2 13l0.800-3l4 2.500z" fill="#111"/></svg>
<svg style="left:393px;top:107px" width="5" height="3" viewBox="0 0 5 3" shape-rendering="crispEdges"><rect x="0" y="0" width="5" height="1" fill="#5e5e5c"/><rect x="1" y="1" width="3" height="1" fill="#5e5e5c"/><rect x="2" y="2" width="1" height="1" fill="#5e5e5c"/></svg>
<div class="sep" style="left:404px;top:96px;height:24px"></div>
<svg style="left:413px;top:100px" width="16" height="16" viewBox="0 0 16 16"><path d="M4.500 2.500h6l3 3v10h-9z" fill="#fbfcfe" stroke="#7b8798"/><path d="M10.500 2.500v3h3" fill="#e4eaf5" stroke="#7b8798"/><g shape-rendering="crispEdges"><rect x="6" y="7" width="5" height="1" fill="#444"/><rect x="6" y="9" width="6" height="1" fill="#444"/><rect x="6" y="11" width="4" height="1" fill="#444"/><rect x="6" y="13" width="3" height="1" fill="#444"/></g><path d="M10.500 13L14.800 7.500l1.400 1.100L12 14.200l-1.900 0.600z" fill="#f4d36a" stroke="#a8842a" stroke-width="0.700"/><path d="M3.500 0v7M0 3.500h7M1 1l5 5M6 1L1 6" stroke="#f09a1c" stroke-width="1"/></svg>
<div class="sep" style="left:436px;top:96px;height:24px"></div>
<svg style="left:446px;top:100px" width="16" height="16" viewBox="0 0 16 16"><rect x="0.500" y="0.500" width="12" height="11" fill="#f6f9fd" stroke="#5573ad"/><rect x="1" y="1" width="11" height="2.500" fill="#5a82cc"/><path d="M2.500 5.500h8M2.500 7.500h8M2.500 9.500h4" stroke="#8b9dbd" stroke-width="0.900"/><circle cx="11.500" cy="10" r="3" fill="#dff3df" stroke="#2f9a3a" stroke-width="1.500"/><path d="M9.500 12.500L7 15.500" stroke="#2f9a3a" stroke-width="2" stroke-linecap="round"/></svg>
<svg style="left:466px;top:107px" width="5" height="3" viewBox="0 0 5 3" shape-rendering="crispEdges"><rect x="0" y="0" width="5" height="1" fill="#5e5e5c"/><rect x="1" y="1" width="3" height="1" fill="#5e5e5c"/><rect x="2" y="2" width="1" height="1" fill="#5e5e5c"/></svg>
<div class="sep" style="left:477px;top:96px;height:24px"></div>
<svg style="left:486px;top:100px" width="16" height="16" viewBox="0 0 16 16"><path d="M4.500 2.500h6l3 3v10h-9z" fill="#fbfcfe" stroke="#7b8798"/><path d="M10.500 2.500v3h3" fill="#e4eaf5" stroke="#7b8798"/><g shape-rendering="crispEdges"><rect x="6" y="7" width="5" height="1" fill="#444"/><rect x="6" y="9" width="6" height="1" fill="#444"/><rect x="6" y="11" width="4" height="1" fill="#444"/><rect x="6" y="13" width="3" height="1" fill="#444"/></g><path d="M10.500 13L14.800 7.500l1.400 1.100L12 14.200l-1.900 0.600z" fill="#f4d36a" stroke="#a8842a" stroke-width="0.700"/><path d="M3.500 0v7M0 3.500h7M1 1l5 5M6 1L1 6" stroke="#f09a1c" stroke-width="1"/></svg>
<svg style="left:507px;top:107px" width="5" height="3" viewBox="0 0 5 3" shape-rendering="crispEdges"><rect x="0" y="0" width="5" height="1" fill="#5e5e5c"/><rect x="1" y="1" width="3" height="1" fill="#5e5e5c"/><rect x="2" y="2" width="1" height="1" fill="#5e5e5c"/></svg>
<div class="a" style="left:0px;top:123px;width:1024px;height:1px;background:#c9c8c3"></div>
<div class="a" style="left:0px;top:124px;width:1024px;height:1px;background:#b9b8b3"></div>
<div class="a" style="left:0px;top:125px;width:1024px;height:6px;background:linear-gradient(#f1f0ed,#e3e2de)"></div>
<div class="a" style="left:0px;top:131px;width:1024px;height:1px;background:#a9a8a3"></div>
<div class="a" style="left:0px;top:132px;width:1024px;height:3px;background:linear-gradient(#f3f2f0,#e6e5e1)"></div>
<div class="a" style="left:0px;top:135px;width:1009px;height:573px;background:#9b9a96"></div>
<div class="a" style="left:4px;top:141px;width:14px;height:14px;background:#fff;border:1px solid #8a8985;box-sizing:border-box"></div>
<svg style="left:8px;top:143px" width="8" height="8" viewBox="0 0 8 8"><path d="M1 0v6h6" fill="none" stroke="#000" stroke-width="2"/></svg>
<div class="a" style="left:119px;top:142px;width:794px;height:12px;background:#e1e0dc"></div>
<div class="a" style="left:236px;top:142px;width:557px;height:12px;background:#fffef1"></div>
<div class="a" style="left:224.5px;top:142px;width:12.5px;height:12px;background:#cfcecb;border-left:1.500px solid #bcbbb7;border-right:1.500px solid #dddcd9;box-sizing:border-box"></div>
<svg style="left:227px;top:143.5px" width="10" height="10" viewBox="0 0 10 10" shape-rendering="crispEdges"><path d="M0.500 0.500h9M0.500 2.500h9M0.500 4.500h9M0.500 6.500h9M0.500 8.500h9" stroke="#f4f3f1" stroke-width="1" stroke-dasharray="1 1"/></svg>
<div class="a" style="left:338.5px;top:142px;width:12.5px;height:12px;background:#cfcecb;border-left:1.500px solid #bcbbb7;border-right:1.500px solid #dddcd9;box-sizing:border-box"></div>
<svg style="left:341px;top:143.5px" width="10" height="10" viewBox="0 0 10 10" shape-rendering="crispEdges"><path d="M0.500 0.500h9M0.500 2.500h9M0.500 4.500h9M0.500 6.500h9M0.500 8.500h9" stroke="#f4f3f1" stroke-width="1" stroke-dasharray="1 1"/></svg>
<div class="a" style="left:451.5px;top:142px;width:12.5px;height:12px;background:#cfcecb;border-left:1.500px solid #bcbbb7;border-right:1.500px solid #dddcd9;box-sizing:border-box"></div>
<svg style="left:454px;top:143.5px" width="10" height="10" viewBox="0 0 10 10" shape-rendering="crispEdges"><path d="M0.500 0.500h9M0.500 2.500h9M0.500 4.500h9M0.500 6.500h9M0.500 8.500h9" stroke="#f4f3f1" stroke-width="1" stroke-dasharray="1 1"/></svg>
<div class="a" style="left:565.5px;top:142px;width:12.5px;height:12px;background:#cfcecb;border-left:1.500px solid #bcbbb7;border-right:1.500px solid #dddcd9;box-sizing:border-box"></div>
<svg style="left:568px;top:143.5px" width="10" height="10" viewBox="0 0 10 10" shape-rendering="crispEdges"><path d="M0.500 0.500h9M0.500 2.500h9M0.500 4.500h9M0.500 6.500h9M0.500 8.500h9" stroke="#f4f3f1" stroke-width="1" stroke-dasharray="1 1"/></svg>
<div class="a" style="left:678.5px;top:142px;width:12.5px;height:12px;background:#cfcecb;border-left:1.500px solid #bcbbb7;border-right:1.500px solid #dddcd9;box-sizing:border-box"></div>
<svg style="left:681px;top:143.5px" width="10" height="10" viewBox="0 0 10 10" shape-rendering="crispEdges"><path d="M0.500 0.500h9M0.500 2.500h9M0.500 4.500h9M0.500 6.500h9M0.500 8.500h9" stroke="#f4f3f1" stroke-width="1" stroke-dasharray="1 1"/></svg>
<div class="a" style="left:792.5px;top:142px;width:12.5px;height:12px;background:#cfcecb;border-left:1.500px solid #bcbbb7;border-right:1.500px solid #dddcd9;box-sizing:border-box"></div>
<svg style="left:795px;top:143.5px" width="10" height="10" viewBox="0 0 10 10" shape-rendering="crispEdges"><path d="M0.500 0.500h9M0.500 2.500h9M0.500 4.500h9M0.500 6.500h9M0.500 8.500h9" stroke="#f4f3f1" stroke-width="1" stroke-dasharray="1 1"/></svg>
<div class="t rn" style="left:136.5px;top:138px;width:20px;text-align:center">6</div>
<div class="t rn" style="left:164.5px;top:138px;width:20px;text-align:center">4</div>
<div class="t rn" style="left:192.5px;top:138px;width:20px;text-align:center">2</div>
<div class="t rn" style="left:248.5px;top:138px;width:20px;text-align:center">2</div>
<div class="t rn" style="left:276.5px;top:138px;width:20px;text-align:center">4</div>
<div class="t rn" style="left:304.5px;top:138px;width:20px;text-align:center">6</div>
<div class="t rn" style="left:360.5px;top:138px;width:20px;text-align:center">10</div>
<div class="t rn" style="left:388.5px;top:138px;width:20px;text-align:center">12</div>
<div class="t rn" style="left:416.5px;top:138px;width:20px;text-align:center">14</div>
<div class="t rn" style="left:472.5px;top:138px;width:20px;text-align:center">18</div>
<div class="t rn" style="left:500.5px;top:138px;width:20px;text-align:center">20</div>
<div class="t rn" style="left:528.5px;top:138px;width:20px;text-align:center">22</div>
<div class="t rn" style="left:562px;top:138px;width:3.200px;overflow:hidden;text-align:left">2</div>
<div class="t rn" style="left:584.5px;top:138px;width:20px;text-align:center">26</div>
<div class="t rn" style="left:612.5px;top:138px;width:20px;text-align:center">28</div>
<div class="t rn" style="left:640.5px;top:138px;width:20px;text-align:center">30</div>
<div class="t rn" style="left:674px;top:138px;width:3.200px;overflow:hidden;text-align:left">3</div>
<div class="t rn" style="left:696.5px;top:138px;width:20px;text-align:center">34</div>
<div class="t rn" style="left:724.5px;top:138px;width:20px;text-align:center">36</div>
<div class="t rn" style="left:752.5px;top:138px;width:20px;text-align:center">38</div>
<div class="t rn" style="left:786px;top:138px;width:3.200px;overflow:hidden;text-align:left">4</div>
<div class="t rn" style="left:808.5px;top:138px;width:20px;text-align:center">42</div>
<div class="t rn" style="left:836.5px;top:138px;width:20px;text-align:center">44</div>
<div class="t rn" style="left:864.5px;top:138px;width:20px;text-align:center">46</div>
<div class="a" style="left:267px;top:154px;width:1px;height:3px;background:#8a8985"></div>
<div class="a" style="left:295px;top:154px;width:1px;height:3px;background:#8a8985"></div>
<div class="a" style="left:323px;top:154px;width:1px;height:3px;background:#8a8985"></div>
<svg style="left:235px;top:138px" width="10" height="22" viewBox="0 0 10 22"><path d="M0.500 0.500H8.500V4.500L4.500 9L0.500 4.500Z" fill="#fff" stroke="#000" stroke-width="1"/><path d="M0.500 16.500V13.500L4.500 9L8.500 13.500V16.500Z" fill="#fff" stroke="#000" stroke-width="1"/><rect x="0.500" y="16.500" width="8" height="4" fill="#fff" stroke="#000"/></svg>
<svg style="left:334px;top:146px" width="10" height="9" viewBox="0 0 10 9"><path d="M0.500 8.500v-4L4.500 0.500L8.500 4.500v4z" fill="#fff" stroke="#000" stroke-width="1"/></svg>
<div class="a" style="left:6px;top:178px;width:12px;height:530px;background:#fffef1"></div>
<div class="a" style="left:6px;top:178px;width:12px;height:96px;background:#e1e0dc"></div>
<div class="a" style="left:6px;top:289px;width:12px;height:6px;background:#c4c3bf"></div>
<div class="a" style="left:6px;top:311.5px;width:12px;height:5.5px;background:#c4c3bf"></div>
<div class="a" style="left:6px;top:339.5px;width:12px;height:5px;background:#c4c3bf"></div>
<div class="t rn" style="left:2px;top:184.5px;width:20px;height:12px;line-height:12px;text-align:center;transform:rotate(-90deg)">4</div>
<div class="t rn" style="left:2px;top:205.5px;width:20px;height:12px;line-height:12px;text-align:center;transform:rotate(-90deg)">3</div>
<div class="t rn" style="left:2px;top:226.5px;width:20px;height:12px;line-height:12px;text-align:center;transform:rotate(-90deg)">2</div>
<div class="t rn" style="left:2px;top:247.5px;width:20px;height:12px;line-height:12px;text-align:center;transform:rotate(-90deg)">1</div>
<div class="t rn" style="left:2px;top:329.4px;width:20px;height:12px;line-height:12px;text-align:center;transform:rotate(-90deg)">3</div>
<div class="t rn" style="left:2px;top:350.2px;width:20px;height:12px;line-height:12px;text-align:center;transform:rotate(-90deg)">4</div>
<div class="t rn" style="left:2px;top:371px;width:20px;height:12px;line-height:12px;text-align:center;transform:rotate(-90deg)">5</div>
<div class="t rn" style="left:2px;top:391.8px;width:20px;height:12px;line-height:12px;text-align:center;transform:rotate(-90deg)">6</div>
<div class="t rn" style="left:2px;top:412.6px;width:20px;height:12px;line-height:12px;text-align:center;transform:rotate(-90deg)">7</div>
<div class="t rn" style="left:2px;top:433.4px;width:20px;height:12px;line-height:12px;text-align:center;transform:rotate(-90deg)">8</div>
<div class="t rn" style="left:2px;top:454.2px;width:20px;height:12px;line-height:12px;text-align:center;transform:rotate(-90deg)">9</div>
<div class="t rn" style="left:2px;top:475px;width:20px;height:12px;line-height:12px;text-align:center;transform:rotate(-90deg)">10</div>
<div class="t rn" style="left:2px;top:495.8px;width:20px;height:12px;line-height:12px;text-align:center;transform:rotate(-90deg)">11</div>
<div class="t rn" style="left:2px;top:516.6px;width:20px;height:12px;line-height:12px;text-align:center;transform:rotate(-90deg)">12</div>
<div class="t rn" style="left:2px;top:537.4px;width:20px;height:12px;line-height:12px;text-align:center;transform:rotate(-90deg)">13</div>
<div class="t rn" style="left:2px;top:558.2px;width:20px;height:12px;line-height:12px;text-align:center;transform:rotate(-90deg)">14</div>
<div class="t rn" style="left:2px;top:579px;width:20px;height:12px;line-height:12px;text-align:center;transform:rotate(-90deg)">15</div>
<div class="t rn" style="left:2px;top:599.8px;width:20px;height:12px;line-height:12px;text-align:center;transform:rotate(-90deg)">16</div>
<div class="t rn" style="left:2px;top:620.6px;width:20px;height:12px;line-height:12px;text-align:center;transform:rotate(-90deg)">17</div>
<div class="t rn" style="left:2px;top:641.4px;width:20px;height:12px;line-height:12px;text-align:center;transform:rotate(-90deg)">18</div>
<div class="t rn" style="left:2px;top:662.2px;width:20px;height:12px;line-height:12px;text-align:center;transform:rotate(-90deg)">19</div>
<div class="t rn" style="left:2px;top:683px;width:20px;height:12px;line-height:12px;text-align:center;transform:rotate(-90deg)">20</div>
<div class="a" style="left:120px;top:179px;width:793px;height:529px;background:#fff;box-shadow:0 0 4px 1px rgba(60,60,55,.55)"></div>
<div class="a" style="left:239px;top:252px;width:1px;height:23px;background:#a5a5a5"></div>
<div class="a" style="left:216px;top:275px;width:17px;height:1px;background:#a5a5a5"></div>
<div class="a" style="left:793px;top:252px;width:1px;height:23px;background:#a5a5a5"></div>
<div class="a" style="left:800px;top:275px;width:17px;height:1px;background:#a5a5a5"></div>
<div class="a" style="left:232px;top:275px;width:569px;height:1px;background:#000"></div>
<div class="a" style="left:232px;top:297px;width:569px;height:1px;background:#000"></div>
<div class="a" style="left:232px;top:318px;width:569px;height:1px;background:#000"></div>
<div class="a" style="left:232px;top:340px;width:569px;height:1px;background:#000"></div>
<div class="a" style="left:232px;top:275px;width:1px;height:66px;background:#000"></div>
<div class="a" style="left:346px;top:275px;width:1px;height:66px;background:#000"></div>
<div class="a" style="left:459px;top:275px;width:1px;height:66px;background:#000"></div>
<div class="a" style="left:573px;top:275px;width:1px;height:66px;background:#000"></div>
<div class="a" style="left:686px;top:275px;width:1px;height:66px;background:#000"></div>
<div class="a" style="left:800px;top:275px;width:1px;height:66px;background:#000"></div>
<svg style="left:173px;top:277px" width="14" height="16" viewBox="0 0 14 16"><path d="M0.500 0.500h8l5 5v10h-13z" fill="#b9c9e2"/><path d="M8.500 0.500v5h5" fill="#dbe4f1"/><path d="M3 5h4M3 8h4M3 11h8M3 13.500h8" stroke="#eef2f8" stroke-width="1.200"/></svg>
<svg style="left:193px;top:283px" width="5" height="3" viewBox="0 0 5 3" shape-rendering="crispEdges"><rect x="0" y="0" width="5" height="1" fill="#a9a9a9"/><rect x="1" y="1" width="3" height="1" fill="#a9a9a9"/><rect x="2" y="2" width="1" height="1" fill="#a9a9a9"/></svg>
<div class="a" style="left:1009px;top:135px;width:15px;height:573px;background:linear-gradient(90deg,#e4e3df,#f0efed)"></div>
<div class="a" style="left:1009px;top:136px;width:15px;height:15px;background:#dfe3ec;border:1px solid #c2c6d0;box-sizing:border-box"></div>
<svg style="left:1011px;top:138px" width="12" height="12" viewBox="0 0 12 12"><rect x="0.500" y="1.500" width="9" height="7" fill="#fff" stroke="#46587c" stroke-width="1"/><path d="M1.500 8V4.500h2l1 1.500l1.500-2.500h2.500" fill="none" stroke="#46587c" stroke-width="1"/><rect x="6" y="5.500" width="5.500" height="5.500" fill="#fff" stroke="#46587c" stroke-width="0.900"/><path d="M7 10.500l1.800-2.500l1.800 2.500z" fill="#fff" stroke="#46587c" stroke-width="0.800"/></svg>
<div class="a" style="left:1009px;top:151px;width:15px;height:16px;background:linear-gradient(90deg,#efeeeb,#e3e2de)"></div>
<svg style="left:1012px;top:157px" width="9" height="5" viewBox="0 0 9 5"><path d="M0 5L4.500 0L9 5z" fill="#4a4a48"/></svg>
<div class="a" style="left:1009px;top:168px;width:15px;height:223px;background:linear-gradient(90deg,#ecebe8 0,#e6e5e1 45%,#c9c8c3 55%,#bdbcb7 100%);border:1px solid #a9a8a3;border-radius:2px;box-sizing:border-box"></div>
<div class="a" style="left:1012px;top:275px;width:8px;height:1px;background:#8f8e8a;box-shadow:0 1px 0 #f4f3f1"></div>
<div class="a" style="left:1012px;top:278px;width:8px;height:1px;background:#8f8e8a;box-shadow:0 1px 0 #f4f3f1"></div>
<div class="a" style="left:1012px;top:281px;width:8px;height:1px;background:#8f8e8a;box-shadow:0 1px 0 #f4f3f1"></div>
<svg style="left:1012px;top:650px" width="9" height="5" viewBox="0 0 9 5"><path d="M0 0L4.500 5L9 0z" fill="#6a6a68"/></svg>
<div class="a" style="left:1009px;top:661px;width:15px;height:47px;background:linear-gradient(90deg,#e9e8e5,#dddcd8)"></div>
<svg style="left:1013px;top:664px" width="7" height="8" viewBox="0 0 7 8"><path d="M0 3.500L3.500 0L7 3.500zM0 8L3.500 4.500L7 8z" fill="#111"/></svg>
<svg style="left:1012.5px;top:680px" width="8" height="8" viewBox="0 0 8 8"><circle cx="4" cy="4" r="3" fill="#cfcfcf" stroke="#333" stroke-width="1"/></svg>
<svg style="left:1013px;top:695px" width="7" height="8" viewBox="0 0 7 8"><path d="M0 0L3.500 3.500L7 0zM0 4.500L3.500 8L7 4.500z" fill="#111"/></svg>
<div class="a" style="left:0px;top:708px;width:1024px;height:33px;background:#e8e7e3"></div>
<div class="strip" style="left:0px;top:708px;width:670px;height:32px;"></div>
<div class="grip" style="left:4px;top:713.5px"></div>
<div class="grip" style="left:4px;top:717.5px"></div>
<div class="grip" style="left:4px;top:721.5px"></div>
<div class="grip" style="left:4px;top:725.5px"></div>
<div class="grip" style="left:4px;top:729.5px"></div>
<div class="grip" style="left:4px;top:733.5px"></div>
<div class="t" style="left:19.5px;top:716px;"><span class="mc" style="font-weight:700">绘图</span><span class="mk" style="font-weight:bold;letter-spacing:-0.400px;-webkit-text-stroke:0">(<u>R</u>)</span></div>
<svg style="left:83px;top:723px" width="5" height="3" viewBox="0 0 5 3" shape-rendering="crispEdges"><rect x="0" y="0" width="5" height="1" fill="#5e5e5c"/><rect x="1" y="1" width="3" height="1" fill="#5e5e5c"/><rect x="2" y="2" width="1" height="1" fill="#5e5e5c"/></svg>
<svg style="left:96px;top:716px" width="16" height="16" viewBox="0 0 16 16"><path d="M3.500 1.500v11.500l2.800-2.600l2 4.600l1.800-0.800l-2-4.500h4z" fill="#fff" stroke="#54698c" stroke-width="1" stroke-linejoin="round"/></svg>
<div class="sep" style="left:118px;top:712px;height:24px"></div>
<svg style="left:127px;top:716px" width="16" height="16" viewBox="0 0 16 16"><rect x="0.500" y="0.500" width="8" height="8" fill="#b4c8ec" stroke="#4a68a8"/><circle cx="10.500" cy="7" r="4.500" fill="#c9d8f2" stroke="#4a68a8"/><path d="M3 7.500v6a2.800 1.500 0 0 0 5.600 0v-6" fill="#dbe5f6" stroke="#4a68a8"/><ellipse cx="5.800" cy="7.500" rx="2.800" ry="1.500" fill="#f1f5fc" stroke="#4a68a8"/></svg>
<svg style="left:148px;top:723px" width="5" height="3" viewBox="0 0 5 3" shape-rendering="crispEdges"><rect x="0" y="0" width="5" height="1" fill="#5e5e5c"/><rect x="1" y="1" width="3" height="1" fill="#5e5e5c"/><rect x="2" y="2" width="1" height="1" fill="#5e5e5c"/></svg>
<svg style="left:160px;top:716px" width="16" height="16" viewBox="0 0 16 16"><path d="M2 2.500L14 14" stroke="#222" stroke-width="1"/></svg>
<svg style="left:184px;top:716px" width="16" height="16" viewBox="0 0 16 16"><path d="M3 3.500L11 11" stroke="#111" stroke-width="1.600"/><path d="M13.500 13.500L7.500 11.200L11.200 7.500z" fill="#111"/></svg>
<svg style="left:208px;top:716px" width="16" height="16" viewBox="0 0 16 16"><rect x="0.500" y="2.500" width="15" height="11" fill="none" stroke="#111" stroke-width="1.200"/></svg>
<svg style="left:232px;top:716px" width="16" height="16" viewBox="0 0 16 16"><ellipse cx="8" cy="8" rx="7.500" ry="4.500" fill="none" stroke="#333" stroke-width="0.900"/></svg>
<svg style="left:256px;top:716px" width="16" height="16" viewBox="0 0 16 16"><rect x="1.500" y="2.500" width="14" height="12" fill="#fbfcfe" stroke="#4a6db0"/><text x="5.500" y="9.500" font-family="Liberation Sans,sans-serif" font-weight="bold" font-size="7.500" text-anchor="middle" fill="#111">A</text><g shape-rendering="crispEdges"><rect x="9" y="5" width="5" height="1" fill="#9fb4dc"/><rect x="9" y="7" width="5" height="1" fill="#9fb4dc"/><rect x="9" y="9" width="5" height="1" fill="#9fb4dc"/><rect x="3" y="11" width="11" height="1" fill="#9fb4dc"/><rect x="3" y="13" width="11" height="1" fill="#9fb4dc"/></g></svg>
<svg style="left:280px;top:716px" width="16" height="16" viewBox="0 0 16 16"><rect x="1.500" y="2.500" width="14" height="12" fill="#fbfcfe" stroke="#4a6db0"/><text x="5.500" y="9.500" font-family="Liberation Sans,sans-serif" font-weight="bold" font-size="7.500" text-anchor="middle" fill="#111">A</text><g shape-rendering="crispEdges"><rect x="9" y="4" width="1" height="10" fill="#9fb4dc"/><rect x="11" y="4" width="1" height="10" fill="#9fb4dc"/><rect x="13" y="4" width="1" height="10" fill="#9fb4dc"/><rect x="3" y="11" width="1" height="3" fill="#9fb4dc"/><rect x="5" y="11" width="1" height="3" fill="#9fb4dc"/><rect x="7" y="11" width="1" height="3" fill="#9fb4dc"/></g></svg>
<svg style="left:304px;top:716px" width="16" height="16" viewBox="0 0 16 16"><path d="M1 12L10 1.500h4.500L12 15.500h-3l0.500-3.500h-3.500L3.500 14zM8 9.500h2l0.800-4.500z" fill="#4a78d0" stroke="#2a4c9c" stroke-width="0.800" fill-rule="evenodd"/></svg>
<svg style="left:328px;top:716px" width="16" height="16" viewBox="0 0 16 16"><rect x="1.500" y="1.500" width="13" height="13" fill="#f4f7fc" stroke="#4a6db0"/><circle cx="5.500" cy="5.500" r="1.500" fill="#d65a3a"/><path d="M2 14l4-5l3 3l2.500-3.500l3 5.500z" fill="#9fb3d4" stroke="#5a6f96" stroke-width="0.600"/></svg>
<svg style="left:353px;top:716px" width="16" height="16" viewBox="0 0 16 16"><rect x="0.500" y="0.500" width="13" height="11" fill="#f2f6fc" stroke="#4a6db0"/><text x="4.500" y="7" font-family="Liberation Sans,sans-serif" font-weight="bold" font-size="7" text-anchor="middle" fill="#111">A</text><path d="M8 3h4.500M8 5h4.500M8 7h4.500M2 9h9" stroke="#8fa5cc" stroke-width="0.800"/><path d="M8 12h4V9.500l4 3.500l-4 3.500V14H8z" fill="#3f6fd0" stroke="#2a4c9c" stroke-width="0.600" transform="rotate(40 12 13)"/></svg>
<div class="sep" style="left:376px;top:712px;height:24px"></div>
<svg style="left:384px;top:716px" width="16" height="16" viewBox="0 0 16 16"><path d="M2 7.500L7.500 2l6 6L8 13.500z" fill="#f4f4f2" stroke="#9a9a97"/><path d="M6 1c0-1.500 2.500-1.500 2.500 0v4" fill="none" stroke="#9a9a97"/><path d="M13.500 8c1.500 1.500 2 3.500 1.500 5c-1-1-2-3-1.500-5z" fill="#b4b4b1"/><rect x="1" y="14.500" width="13" height="1" fill="#dcdcd9"/></svg>
<svg style="left:405px;top:723px" width="5" height="3" viewBox="0 0 5 3" shape-rendering="crispEdges"><rect x="0" y="0" width="5" height="1" fill="#b9b8b4"/><rect x="1" y="1" width="3" height="1" fill="#b9b8b4"/><rect x="2" y="2" width="1" height="1" fill="#b9b8b4"/></svg>
<svg style="left:418px;top:716px" width="16" height="16" viewBox="0 0 16 16"><path d="M6 9.500c3-1 6-4 8.500-8.500c-0.500 4-3 7.500-6 9.500z" fill="#d2d2cf" stroke="#a2a29f" stroke-width="0.700"/><path d="M1 10.500h5l2 0.500" stroke="#8a8a87" stroke-width="1.300" fill="none"/><rect x="1" y="12" width="13" height="3.500" fill="#8a8a87"/></svg>
<svg style="left:438px;top:723px" width="5" height="3" viewBox="0 0 5 3" shape-rendering="crispEdges"><rect x="0" y="0" width="5" height="1" fill="#b9b8b4"/><rect x="1" y="1" width="3" height="1" fill="#b9b8b4"/><rect x="2" y="2" width="1" height="1" fill="#b9b8b4"/></svg>
<svg style="left:450px;top:716px" width="16" height="16" viewBox="0 0 16 16"><text transform="translate(8.300 10.500) scale(1.250 1)" x="0" y="0" font-family="Liberation Serif,serif" font-weight="bold" font-size="15" text-anchor="middle" fill="#3a5fc4">A</text><rect x="1" y="12" width="15" height="3.600" fill="#1212c4"/></svg>
<svg style="left:471px;top:723px" width="5" height="3" viewBox="0 0 5 3" shape-rendering="crispEdges"><rect x="0" y="0" width="5" height="1" fill="#5e5e5c"/><rect x="1" y="1" width="3" height="1" fill="#5e5e5c"/><rect x="2" y="2" width="1" height="1" fill="#5e5e5c"/></svg>
<svg style="left:484px;top:716px" width="16" height="16" viewBox="0 0 16 16"><rect x="0.500" y="2.500" width="15" height="2" fill="#444"/><rect x="0.500" y="6.800" width="15" height="2.500" fill="#444"/><rect x="0.500" y="11.300" width="15" height="3" fill="#444"/></svg>
<svg style="left:504px;top:723px" width="5" height="3" viewBox="0 0 5 3" shape-rendering="crispEdges"><rect x="0" y="0" width="5" height="1" fill="#b9b8b4"/><rect x="1" y="1" width="3" height="1" fill="#b9b8b4"/><rect x="2" y="2" width="1" height="1" fill="#b9b8b4"/></svg>
<svg style="left:517px;top:716px" width="16" height="16" viewBox="0 0 16 16"><path d="M0.500 3h15" stroke="#333" stroke-width="1" stroke-dasharray="3 1.500"/><path d="M0.500 6h15" stroke="#333" stroke-width="1" stroke-dasharray="2 1"/><path d="M0.500 9h15" stroke="#333" stroke-width="1" stroke-dasharray="1 1"/><path d="M0.500 12.500h15" stroke="#333" stroke-width="1.300"/></svg>
<svg style="left:537px;top:723px" width="5" height="3" viewBox="0 0 5 3" shape-rendering="crispEdges"><rect x="0" y="0" width="5" height="1" fill="#b9b8b4"/><rect x="1" y="1" width="3" height="1" fill="#b9b8b4"/><rect x="2" y="2" width="1" height="1" fill="#b9b8b4"/></svg>
<svg style="left:550px;top:716px" width="16" height="16" viewBox="0 0 16 16"><path d="M1 3.500h13M1 8h13M1 12.500h13" stroke="#555" stroke-width="0.900"/><path d="M11 1.500l3 2l-3 2M4 6L1 8l3 2M11 10.500l3 2l-3 2" fill="none" stroke="#555" stroke-width="0.900"/></svg>
<svg style="left:570px;top:723px" width="5" height="3" viewBox="0 0 5 3" shape-rendering="crispEdges"><rect x="0" y="0" width="5" height="1" fill="#b9b8b4"/><rect x="1" y="1" width="3" height="1" fill="#b9b8b4"/><rect x="2" y="2" width="1" height="1" fill="#b9b8b4"/></svg>
<svg style="left:583px;top:716px" width="16" height="16" viewBox="0 0 16 16"><rect x="3.500" y="3.500" width="11" height="11" fill="#8f8f8c"/><rect x="1" y="1" width="11" height="11" fill="url(#ggray)" stroke="#9a9a97" stroke-width="0.600"/></svg>
<svg style="left:603px;top:723px" width="5" height="3" viewBox="0 0 5 3" shape-rendering="crispEdges"><rect x="0" y="0" width="5" height="1" fill="#b9b8b4"/><rect x="1" y="1" width="3" height="1" fill="#b9b8b4"/><rect x="2" y="2" width="1" height="1" fill="#b9b8b4"/></svg>
<svg style="left:615px;top:716px" width="16" height="16" viewBox="0 0 16 16"><path d="M1 5l4-4h10v9l-4 4.500H1z" fill="#9c9c99" stroke="#6c6c69" stroke-width="0.700"/><path d="M1 5h10v9.500H1z" fill="url(#ggray)" stroke="#6c6c69" stroke-width="0.700"/><path d="M1 5l4-4h10l-4 4z" fill="#dededb" stroke="#6c6c69" stroke-width="0.700"/></svg>
<svg style="left:636px;top:723px" width="5" height="3" viewBox="0 0 5 3" shape-rendering="crispEdges"><rect x="0" y="0" width="5" height="1" fill="#b9b8b4"/><rect x="1" y="1" width="3" height="1" fill="#b9b8b4"/><rect x="2" y="2" width="1" height="1" fill="#b9b8b4"/></svg>
<svg style="left:648px;top:716px" width="16" height="16" viewBox="0 0 16 16"><rect x="0.500" y="0.500" width="9" height="9" fill="#6e8fd0" stroke="#2f4f96"/><rect x="4.500" y="4.500" width="9" height="9" fill="#f6d772" stroke="#b08a1e"/><path d="M10.500 7.500v8l2-1.800l1.300 3l1.200-0.600l-1.300-2.900h2.600z" fill="#fff" stroke="#3f5a8c" stroke-width="0.800" stroke-linejoin="round"/></svg>
<div class="a" style="left:0px;top:740px;width:1024px;height:1px;background:#9d9c98"></div>
<div class="a" style="left:0px;top:741px;width:1024px;height:1px;background:#f4f3f1"></div>
<div class="a" style="left:0px;top:742px;width:1024px;height:22px;background:#e8e7e3"></div>
<div class="a" style="left:3px;top:744px;width:102px;height:20px;background:#c95f53;border:1px solid #f2a9a0;border-bottom:none;border-radius:3px 3px 0 0;box-sizing:border-box"></div>
<div class="t" style="left:17px;top:746px;color:#fff;font-size:14.600px;font-weight:400">产品未激活</div>
<div class="a" style="left:108px;top:746px;width:1px;height:17px;background:#a9a8a4;box-shadow:1px 0 0 #f7f6f4"></div>
<div class="st" style="left:117px;top:745px;"><span class="cj">页码</span>: 1</div>
<div class="a" style="left:165px;top:746px;width:1px;height:17px;background:#a9a8a4;box-shadow:1px 0 0 #f7f6f4"></div>
<div class="st" style="left:175px;top:745px;"><span class="cj">页面</span>: 1/1</div>
<div class="st" style="left:248px;top:745px;"><span class="cj">节</span>: 1/1</div>
<div class="st" style="left:303px;top:745px;"><span class="cj">设置值</span>: 2.5<span class="cj">厘米</span></div>
<div class="st" style="left:411px;top:745px;"><span class="cj">行</span>: 1</div>
<div class="st" style="left:446px;top:745px;"><span class="cj">列</span>: 1</div>
<div class="a" style="left:478px;top:746px;width:1px;height:17px;background:#a9a8a4;box-shadow:1px 0 0 #f7f6f4"></div>
<div class="st" style="left:488px;top:745px;"><span class="cj">字数</span>: 0</div>
<div class="a" style="left:539px;top:746px;width:1px;height:17px;background:#a9a8a4;box-shadow:1px 0 0 #f7f6f4"></div>
<div class="a" style="left:545px;top:749px;width:7px;height:7px;background:#59b01b;border:1px solid #3d7f10;border-radius:2px;box-sizing:border-box"></div>
<div class="st" style="left:555px;top:745px;"><span class="cj">拼写检查</span></div>
<div class="a" style="left:620px;top:746px;width:1px;height:17px;background:#a9a8a4;box-shadow:1px 0 0 #f7f6f4"></div>
<svg style="left:694px;top:746px" width="16" height="16" viewBox="0 0 16 16"><path d="M0.500 4v-3.500h3.500M12 0.500h3.500v3.500M15.500 12v3.500h-3.500M4 15.500h-3.500v-3.500" fill="none" stroke="#555" stroke-width="1.100"/><rect x="3.500" y="3.500" width="9" height="9" fill="#f6f6f4" stroke="#777" stroke-width="0.900"/><path d="M5.500 6h5M5.500 8h5M5.500 10h3" stroke="#777" stroke-width="0.900"/></svg>
<div class="act" style="left:713px;top:742px;width:25px;height:24px;"></div>
<svg style="left:718px;top:746px" width="16" height="16" viewBox="0 0 16 16"><rect x="2.500" y="0.500" width="11" height="15" fill="#fdfdfb" stroke="#555"/><path d="M5 3.500h2M8.500 3.500h2.500M5 6.500h6.500M5 9h6.500M5 11.500h4" stroke="#555" stroke-width="1"/></svg>
<svg style="left:741px;top:746px" width="16" height="16" viewBox="0 0 16 16"><rect x="1.500" y="0.500" width="13" height="15" fill="#eaf4fd" stroke="#2d4f8e" stroke-width="1.200"/><path d="M3.500 3.500h1.500M6.500 3.500h6M5 6.500h1.500M8 6.500h4.500M5 9.500h1.500M8 9.500h4.500M3.500 12.500h1.500M6.500 12.500h6" stroke="#1f3f7e" stroke-width="1.400"/></svg>
<svg style="left:765px;top:746px" width="16" height="16" viewBox="0 0 16 16"><rect x="1.500" y="0.500" width="10" height="13" fill="#fbfbfa" stroke="#6a6a68"/><path d="M3.500 3.500h6M3.500 6h6M3.500 8.500h3" stroke="#8a8a88" stroke-width="1"/><circle cx="11" cy="11.500" r="4.300" fill="url(#gglobe)" stroke="#2b57ad" stroke-width="0.600"/><path d="M8 11l2-1.500l1 2l2-2l1.500 2" fill="none" stroke="#eef4fc" stroke-width="1.200"/></svg>
<svg style="left:790px;top:746px" width="16" height="16" viewBox="0 0 16 16"><path d="M1 0.500h14v11L8 16L1 11.500z" fill="#4a7ad0" stroke="#2f5ab0" stroke-width="0.600"/><ellipse cx="8" cy="6.500" rx="4.500" ry="2.800" fill="#fff"/><circle cx="8" cy="6.500" r="1.600" fill="#4a7ad0"/></svg>
<div class="a" style="left:809px;top:746px;width:1px;height:17px;background:#a9a8a4;box-shadow:1px 0 0 #f7f6f4"></div>
<div class="st" style="left:814px;top:745px;">100%</div>
<svg style="left:853.5px;top:745.5px" width="17" height="17" viewBox="0 0 17 17"><circle cx="8.500" cy="8.500" r="7.500" fill="#f3f2f0" stroke="#b2b1ad"/><path d="M4.500 8.500h8" stroke="#555" stroke-width="2"/></svg>
<div class="a" style="left:876px;top:754px;width:92px;height:1px;background:#b9b8b4"></div>
<svg style="left:914px;top:747.5px" width="13" height="13" viewBox="0 0 13 13"><circle cx="6.500" cy="6.500" r="5.800" fill="#f6f5f4" stroke="#a9a8a4"/></svg>
<svg style="left:971px;top:745.5px" width="17" height="17" viewBox="0 0 17 17"><circle cx="8.500" cy="8.500" r="7.500" fill="#f3f2f0" stroke="#b2b1ad"/><path d="M4.500 8.500h8M8.500 4.500v8" stroke="#555" stroke-width="2"/></svg>
<svg style="left:992px;top:748px" width="14" height="14" viewBox="0 0 14 14"><g transform="scale(0.875)"><path d="M1 1l4.500 4.500M15 1l-4.500 4.500M1 15l4.500-4.500M15 15l-4.500-4.500" stroke="#2d4a6e" stroke-width="1.500"/><path d="M0.500 0.500h4.500l-4.500 4.500zM15.500 0.500h-4.500l4.500 4.500zM0.500 15.500h4.500l-4.500-4.500zM15.500 15.500h-4.500l4.500-4.500z" fill="#2d4a6e"/><rect x="7.300" y="7.300" width="1.400" height="1.400" fill="#2d4a6e"/></g></svg>
<div class="a" style="left:1021px;top:754px;width:2px;height:2px;background:#fff;box-shadow:-1px -1px 0 #b9b8b4"></div>
<div class="a" style="left:1018px;top:757px;width:2px;height:2px;background:#fff;box-shadow:-1px -1px 0 #b9b8b4"></div>
<div class="a" style="left:1021px;top:757px;width:2px;height:2px;background:#fff;box-shadow:-1px -1px 0 #b9b8b4"></div>
<div class="a" style="left:1015px;top:760px;width:2px;height:2px;background:#fff;box-shadow:-1px -1px 0 #b9b8b4"></div>
<div class="a" style="left:1018px;top:760px;width:2px;height:2px;background:#fff;box-shadow:-1px -1px 0 #b9b8b4"></div>
<div class="a" style="left:1021px;top:760px;width:2px;height:2px;background:#fff;box-shadow:-1px -1px 0 #b9b8b4"></div>
<div class="a" style="left:0px;top:0px;width:1px;height:135px;background:#c4c3bf"></div>
<div class="a" style="left:0px;top:708px;width:1px;height:56px;background:#b4b3af"></div>
</div>
<div class="a" style="left:1027px;top:99px;width:12px;height:771px;background:#fff"></div><div class="a" style="left:1027px;top:99px;width:14px;height:770px;border-radius:7px;background:#dddbd7;"></div><div class="a" style="left:1027px;top:99px;width:14px;height:748px;border-radius:7px;background:linear-gradient(90deg,#fbfbfa,#f1f0ee);border:1px solid #d0cec9;box-sizing:border-box"></div><div class="a" style="left:0;top:869px;width:1039px;height:14px;background:#fff"></div><div class="a" style="left:0;top:869px;width:1027px;height:16px;border-radius:8px;background:#dddbd7;"></div><div class="a" style="left:5px;top:869px;width:1022px;height:16px;border-radius:8px;background:linear-gradient(#fbfbfa,#f1f0ee);border:1px solid #d0cec9;box-sizing:border-box"></div></body></html>
